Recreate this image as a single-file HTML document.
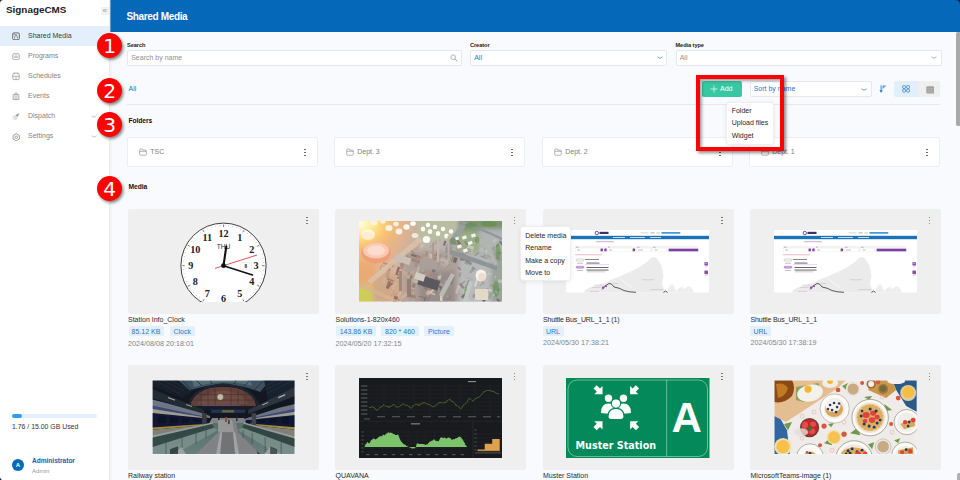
<!DOCTYPE html>
<html><head><meta charset="utf-8"><title>Shared Media</title>
<style>
*{box-sizing:border-box;margin:0;padding:0}
html,body{width:960px;height:480px;overflow:hidden;background:#f9fafd;font-family:"Liberation Sans",sans-serif;font-size:7px;color:#333}
.abs{position:absolute}
#side{position:absolute;left:0;top:0;width:110px;height:480px;background:#fff;border-right:1px solid #e9ebef;box-shadow:1px 0 2px rgba(0,0,0,.05)}
#brand{position:absolute;left:6px;top:4.3px;font-size:9.9px;font-weight:bold;color:#222}
.mi{position:absolute;left:0;width:109px;height:20px;line-height:20.8px;padding-left:28px;color:#838383;font-size:7px;overflow:hidden}
.mi.act{background:#e3f0fc;color:#3c3c3c}
.mi svg{position:absolute;left:12px;top:6px}
#hdr{position:absolute;left:110px;top:0;width:850px;height:32px;background:#0568b8}
#hdr span{position:absolute;left:16.4px;top:11.1px;color:#fff;font-size:10px;font-weight:bold;letter-spacing:-.34px}
.lbl{position:absolute;margin-top:1px;font-size:5.6px;letter-spacing:-.05px;font-weight:bold;color:#222;white-space:nowrap}
.inp{position:absolute;height:16px;background:#fff;border:1px solid #e4e7ec;border-radius:2px;line-height:14.5px;padding-left:3.2px;font-size:7px;color:#909090;white-space:nowrap}
.blue{color:#2a78c2}
.sec{position:absolute;font-size:6.7px;letter-spacing:-.08px;font-weight:bold;color:#111}
.fold{position:absolute;top:137px;width:191px;height:30px;background:#fff;border:1px solid #eceef1;border-radius:2px}
.fold span{position:absolute;left:22.2px;top:10.3px;font-size:7px;color:#7e7e7e}
.fold svg{position:absolute;left:11.3px;top:10.2px}
.card{position:absolute;width:191px;height:105px;background:#efefef;border-radius:2px}
.cap{position:absolute;margin-top:.3px;font-size:7px;color:#2a2a2a;white-space:nowrap}
.tag{position:absolute;margin-top:-.4px;height:9.9px;line-height:11.6px;background:#e3f0fc;color:#2a78c2;font-size:7px;border-radius:1.5px;text-align:center;white-space:nowrap}
.date{position:absolute;font-size:7.2px;color:#858585;white-space:nowrap}
.dots{position:absolute;width:1.6px;height:1.6px;border-radius:50%;background:#6a6a6a;box-shadow:0 3px 0 #6a6a6a,0 6px 0 #6a6a6a}
.num{position:absolute;width:25px;height:25px;border-radius:50%;background:#fd0303;color:#fff;font-family:"DejaVu Sans",sans-serif;font-size:20.3px;line-height:26.2px;text-align:center;box-shadow:1.5px 2px 3px rgba(0,0,0,.45)}
.menu{position:absolute;background:#fff;border:1px solid #eceef1;border-radius:2px;box-shadow:0 1px 4px rgba(0,0,0,.08)}
.menu div{position:absolute;left:4px;font-size:7px;color:#262626;white-space:nowrap}
</style></head><body>
<div id="side">
 <div id="brand">SignageCMS</div>
 <div class="abs" style="left:101px;top:6.7px;width:7.5px;height:8px;background:#f2f2f2;color:#9a9a9a;font-size:8px;line-height:7.4px;text-align:center">«</div>
 <div class="mi act" style="top:26px">Shared Media</div>
 <div class="mi" style="top:46px">Programs</div>
 <div class="mi" style="top:66px">Schedules</div>
 <div class="mi" style="top:86px">Events</div>
 <div class="mi" style="top:106px">Dispatch</div>
 <div class="mi" style="top:126px">Settings</div>
 <svg class="abs" style="left:12px;top:31.5px" width="8" height="8.5" viewBox="0 0 8 8.5"><rect x=".7" y=".9" width="6.6" height="6.8" rx="1.1" fill="#eef2f6" stroke="#5a5f66" stroke-width=".9"/><path d="M2.3 6.6 L3.6 2.6 L4.4 2.6 L5.8 6.6 M1.3 2.2 H3" stroke="#5a5f66" stroke-width=".7" fill="none"/></svg>
<svg class="abs" style="left:12px;top:52.5px" width="8" height="7.5" viewBox="0 0 8 7.5"><rect x=".8" y=".8" width="6.4" height="5.9" rx=".9" fill="none" stroke="#a2a2a2" stroke-width=".9"/><path d="M2.7 3 H5.3 V4.5 H2.7Z" fill="none" stroke="#a2a2a2" stroke-width=".7"/></svg>
<svg class="abs" style="left:12px;top:72px" width="8" height="8.5" viewBox="0 0 8 8.5"><rect x=".8" y="1.2" width="6.4" height="6.4" rx="1.3" fill="none" stroke="#a2a2a2" stroke-width=".9"/><path d="M.8 4.2 H7.2 M4 4.2 V7.4 M2.6 .6 V2 M5.4 .6 V2" stroke="#a2a2a2" stroke-width=".8"/></svg>
<svg class="abs" style="left:12px;top:92px" width="8" height="8.5" viewBox="0 0 8 8.5"><path d="M1.2 2.6 H6.8 V7.6 H1.2Z" fill="none" stroke="#a2a2a2" stroke-width=".9"/><path d="M2.6 2.4 Q2.6 .9 4 .9 Q5.4 .9 5.4 2.4 M3.1 3.4 V7.4 M4.9 3.4 V7.4" stroke="#a2a2a2" stroke-width=".8" fill="none"/></svg>
<svg class="abs" style="left:12px;top:112px" width="8.5" height="8.5" viewBox="0 0 8.5 8.5"><path d="M7.6 .9 L5.6 5.2 L4.4 4.1 L3.3 2.9Z" fill="#a2a2a2"/><path d="M4.6 3.9 L1.2 7.4 M2.6 3.6 L.9 5.3 M5 5.9 L3.2 7.6" stroke="#a2a2a2" stroke-width=".8" fill="none"/></svg>
<svg class="abs" style="left:12px;top:132.5px" width="8.5" height="8.5" viewBox="0 0 8.5 8.5"><path d="M4.25 .7 L7.4 2.5 V6 L4.25 7.8 L1.1 6 V2.5Z" fill="none" stroke="#8f8f8f" stroke-width=".85"/><circle cx="4.25" cy="4.25" r="1.25" fill="none" stroke="#8f8f8f" stroke-width=".8"/></svg>
<svg class="abs" style="left:91px;top:114.5px" width="6" height="4" viewBox="0 0 6 4"><path d="M.6 .8 Q3 3.6 5.4 .8" fill="none" stroke="#aaa" stroke-width=".7"/></svg>
<svg class="abs" style="left:91px;top:134.5px" width="6" height="4" viewBox="0 0 6 4"><path d="M.6 .8 Q3 3.6 5.4 .8" fill="none" stroke="#aaa" stroke-width=".7"/></svg>

 <div class="abs" style="left:12px;top:414px;width:85px;height:4px;border-radius:2px;background:#e3f0fd"></div>
 <div class="abs" style="left:12px;top:414px;width:10px;height:4px;border-radius:2px;background:#2d9cf5"></div>
 <div class="abs" style="left:12px;top:422.8px;font-size:6.9px;color:#333">1.76 / 15.00 GB Used</div>
 <div class="abs" style="left:12px;top:459px;width:12px;height:12px;border-radius:50%;background:#0568b8;color:#fff;font-size:6px;font-weight:bold;line-height:12px;text-align:center">A</div>
 <div class="abs" style="left:32px;top:457.2px;font-size:6.55px;font-weight:bold;color:#0d63ad">Administrator</div>
 <div class="abs" style="left:32px;top:466.8px;font-size:6.1px;color:#999">Admin</div>
</div>
<div id="hdr"><span>Shared Media</span></div><div class="abs" style="left:109.6px;top:0;width:1.2px;height:32px;background:rgba(255,255,255,.35)"></div>

<div class="lbl" style="left:127px;top:41px">Search</div>
<div class="inp" style="left:127px;top:50px;width:335px">Search by name</div>
<div class="lbl" style="left:470px;top:41px">Creator</div>
<div class="inp blue" style="left:470px;top:50px;width:197px">All</div>
<div class="lbl" style="left:675.5px;top:41px">Media type</div>
<div class="inp" style="left:675.5px;top:50px;width:266px">All</div>

<div class="abs blue" style="left:128.5px;top:85px;font-size:7px">All</div>
<div class="abs" style="left:127px;top:104px;width:813px;height:1px;background:#e6e8ec"></div>

<div class="abs" style="left:702px;top:81px;width:39.5px;height:16px;background:#36c8a3;border-radius:2px;color:#fff;font-size:7px;line-height:16.6px;padding-left:18px">Add</div>
<div class="inp blue" style="left:749.5px;top:81px;width:122px;height:16px;line-height:14px">Sort by name</div>
<div class="abs" style="left:893.5px;top:81px;width:24.5px;height:16.4px;background:#e1effb;border-radius:2px 0 0 2px"></div>
<div class="abs" style="left:918px;top:81px;width:22px;height:16.4px;background:#efefef;border-radius:0 2px 2px 0"></div>
<svg class="abs" style="left:449.5px;top:54px" width="8" height="8" viewBox="0 0 8 8"><circle cx="3.2" cy="3.2" r="2.3" fill="none" stroke="#9a9a9a" stroke-width=".75"/><path d="M4.9 4.9 L7.3 7.3" stroke="#9a9a9a" stroke-width=".85"/></svg>
<svg class="abs" style="left:656.5px;top:56.3px" width="6" height="4" viewBox="0 0 6 4"><path d="M.5 .9 Q3 3.6 5.5 .9" fill="none" stroke="#3a85cc" stroke-width=".75"/></svg>
<svg class="abs" style="left:930.5px;top:56.3px" width="6" height="4" viewBox="0 0 6 4"><path d="M.5 .9 Q3 3.6 5.5 .9" fill="none" stroke="#9a9a9a" stroke-width=".75"/></svg>
<svg class="abs" style="left:861px;top:87.5px" width="6" height="4" viewBox="0 0 6 4"><path d="M.5 .9 Q3 3.6 5.5 .9" fill="none" stroke="#3a85cc" stroke-width=".75"/></svg>
<svg class="abs" style="left:878.5px;top:84.8px" width="8" height="8" viewBox="0 0 8 8"><path d="M2.1 .4 V6.4" stroke="#2a78c2" stroke-width=".9"/><path d="M.8 5.5 L2.1 7.4 L3.4 5.5Z" fill="#2a78c2" stroke="#2a78c2" stroke-width=".5"/><path d="M3.5 .4 H7.5 L3.5 4.3Z" fill="#4a90d4" opacity=".85"/></svg>
<svg class="abs" style="left:901.6px;top:85.3px" width="8.4" height="7.9" viewBox="0 0 9 8.5"><g fill="none" stroke="#2a78c2" stroke-width=".8"><rect x=".7" y=".7" width="3.1" height="3" rx=".9"/><rect x="5" y=".7" width="3.1" height="3" rx=".9"/><rect x=".7" y="4.6" width="3.1" height="3" rx=".9"/><rect x="5" y="4.6" width="3.1" height="3" rx=".9"/></g></svg>
<svg class="abs" style="left:925.8px;top:85.6px" width="8.5" height="8" viewBox="0 0 8.5 8"><rect x=".3" y=".3" width="7.8" height="7.2" rx="1.2" fill="#a0a0a0"/><path d="M.3 2.7 H8.1 M.3 5.1 H8.1 M3 2.7 V7.5 M5.6 2.7 V7.5" stroke="#c4c4c4" stroke-width=".45"/></svg>
<svg class="abs" style="left:710.2px;top:85.4px" width="8" height="8" viewBox="0 0 8 8"><path d="M4 .5 V7.5 M.5 4 H7.5" stroke="#fff" stroke-width=".65"/></svg>


<div class="sec" style="left:128.5px;top:116.5px">Folders</div>
<div class="fold" style="left:127px"><svg width="8" height="8" viewBox="0 0 8 8"><path d="M.7 2 Q.7 1 1.5 1 H3.2 L3.9 2.1 H6.5 Q7.3 2.1 7.3 2.9 V6.4 Q7.3 7.2 6.5 7.2 H1.5 Q.7 7.2 .7 6.4Z M.7 3.3 H7.3" fill="none" stroke="#8f8f8f" stroke-width=".65"/></svg>
<span>TSC</span><i class="dots" style="left:176.4px;top:10.6px;background:#555;box-shadow:0 3px 0 #555,0 6px 0 #555"></i></div>
<div class="fold" style="left:334px"><svg width="8" height="8" viewBox="0 0 8 8"><path d="M.7 2 Q.7 1 1.5 1 H3.2 L3.9 2.1 H6.5 Q7.3 2.1 7.3 2.9 V6.4 Q7.3 7.2 6.5 7.2 H1.5 Q.7 7.2 .7 6.4Z M.7 3.3 H7.3" fill="none" stroke="#8f8f8f" stroke-width=".65"/></svg>
<span>Dept. 3</span><i class="dots" style="left:176.4px;top:10.6px;background:#555;box-shadow:0 3px 0 #555,0 6px 0 #555"></i></div>
<div class="fold" style="left:542px"><svg width="8" height="8" viewBox="0 0 8 8"><path d="M.7 2 Q.7 1 1.5 1 H3.2 L3.9 2.1 H6.5 Q7.3 2.1 7.3 2.9 V6.4 Q7.3 7.2 6.5 7.2 H1.5 Q.7 7.2 .7 6.4Z M.7 3.3 H7.3" fill="none" stroke="#8f8f8f" stroke-width=".65"/></svg>
<span>Dept. 2</span><i class="dots" style="left:176.4px;top:10.6px;background:#555;box-shadow:0 3px 0 #555,0 6px 0 #555"></i></div>
<div class="fold" style="left:749px"><svg width="8" height="8" viewBox="0 0 8 8"><path d="M.7 2 Q.7 1 1.5 1 H3.2 L3.9 2.1 H6.5 Q7.3 2.1 7.3 2.9 V6.4 Q7.3 7.2 6.5 7.2 H1.5 Q.7 7.2 .7 6.4Z M.7 3.3 H7.3" fill="none" stroke="#8f8f8f" stroke-width=".65"/></svg>
<span>Dept. 1</span><i class="dots" style="left:176.4px;top:10.6px;background:#555;box-shadow:0 3px 0 #555,0 6px 0 #555"></i></div>

<div class="sec" style="left:128.5px;top:183px">Media</div>

<div class="card" style="left:127.5px;top:209px"><i class="dots" style="left:178.6px;top:7.6px"></i></div>
<div class="card" style="left:335px;top:209px"><i class="dots" style="left:178.6px;top:7.6px"></i></div>
<div class="card" style="left:542.5px;top:209px"><i class="dots" style="left:178.6px;top:7.6px"></i></div>
<div class="card" style="left:750px;top:209px"><i class="dots" style="left:178.6px;top:7.6px"></i></div>
<div class="card" style="left:127.5px;top:365px"><i class="dots" style="left:178.6px;top:7.6px"></i></div>
<div class="card" style="left:335px;top:365px"><i class="dots" style="left:178.6px;top:7.6px"></i></div>
<div class="card" style="left:542.5px;top:365px"><i class="dots" style="left:178.6px;top:7.6px"></i></div>
<div class="card" style="left:750px;top:365px"><i class="dots" style="left:178.6px;top:7.6px"></i></div>
<svg class="abs" style="left:151.8px;top:222px" width="143" height="80" viewBox="0 0 143 80">
<circle cx="71.5" cy="43.7" r="42.6" fill="#fff" stroke="#2a2a2a" stroke-width=".9"/>
<circle cx="71.5" cy="43.7" r="40.2" fill="none" stroke="#777" stroke-width=".9" stroke-dasharray=".5 3.71"/>
<path d="M71.5 5.1L71.5 2.4M90.8 10.3L92.1 7.9M104.9 24.4L107.3 23.1M110.1 43.7L112.8 43.7M104.9 63.0L107.3 64.3M90.8 77.1L92.1 79.5M71.5 82.3L71.5 85.0M52.2 77.1L50.8 79.5M38.1 63.0L35.7 64.4M32.9 43.7L30.2 43.7M38.1 24.4L35.7 23.1M52.2 10.3L50.8 7.9" stroke="#444" stroke-width=".6"/>
<g font-family="Liberation Serif,serif" font-weight="bold" font-size="10.2" fill="#1c1c1c" text-anchor="middle"><text x="87.8" y="18.8">1</text><text x="99.7" y="30.8">2</text><text x="104.1" y="47.1">3</text><text x="99.7" y="63.4">4</text><text x="87.8" y="75.3">5</text><text x="71.5" y="79.7">6</text><text x="55.2" y="75.3">7</text><text x="43.3" y="63.4">8</text><text x="38.9" y="47.1">9</text><text x="43.3" y="30.8">10</text><text x="55.2" y="18.8">11</text><text x="71.5" y="14.5">12</text></g>
<text x="71.5" y="27" font-family="Liberation Sans,sans-serif" font-size="6.6" fill="#2a2a2a" text-anchor="middle">THU</text>
<rect x="88.2" y="40.6" width="11.4" height="6.6" rx=".5" fill="#fff" stroke="#d0d0d0" stroke-width=".4"/>
<text x="93.9" y="45.8" font-family="Liberation Serif,serif" font-weight="bold" font-size="5.2" fill="#222" text-anchor="middle">8</text>
<line x1="63" y1="46.4" x2="105" y2="33" stroke="#d8262a" stroke-width=".8"/>
<line x1="71.5" y1="43.7" x2="74.3" y2="24.5" stroke="#111" stroke-width="2.1" stroke-linecap="round"/>
<line x1="71.5" y1="43.7" x2="100.5" y2="53" stroke="#111" stroke-width="1.5" stroke-linecap="round"/>
<circle cx="71.5" cy="43.7" r="2.4" fill="#111"/>
</svg><svg class="abs" style="left:359px;top:221.2px" width="143" height="80.5" viewBox="0 0 143 80.5" preserveAspectRatio="none">
<defs>
<filter id="b2" x="-20%" y="-20%" width="140%" height="140%"><feGaussianBlur stdDeviation="2.2"/></filter>
<filter id="b1" x="-20%" y="-20%" width="140%" height="140%"><feGaussianBlur stdDeviation=".55"/></filter>
<linearGradient id="sbase" x1="0" y1="0" x2="1" y2="0"><stop offset="0" stop-color="#ecb884"/><stop offset=".25" stop-color="#d6b49c"/><stop offset=".45" stop-color="#bcb3ab"/><stop offset="1" stop-color="#b2b7b8"/></linearGradient>
<radialGradient id="sun" cx="0" cy="0" r="1" gradientUnits="userSpaceOnUse" gradientTransform="translate(0 2) scale(62 50)">
<stop offset="0" stop-color="#fffde4"/><stop offset=".14" stop-color="#fff3b4"/><stop offset=".3" stop-color="#ffdf80"/><stop offset=".5" stop-color="#fcc06e" stop-opacity=".8"/><stop offset="1" stop-color="#f0a878" stop-opacity="0"/></radialGradient>
<clipPath id="cs"><rect width="143" height="80.5"/></clipPath>
</defs>
<g clip-path="url(#cs)">
<rect width="143" height="80.5" fill="url(#sbase)"/>
<g filter="url(#b2)">
<rect x="58" y="-4" width="40" height="24" fill="#b9bea0"/>
<rect x="100" y="-5" width="50" height="16" fill="#7f9470"/>
<rect x="96" y="10" width="26" height="22" fill="#9aad86"/>
<rect x="120" y="8" width="28" height="30" fill="#b0b4b2"/>
<rect x="132" y="30" width="16" height="55" fill="#9aa498"/>
<rect x="44" y="30" width="56" height="55" fill="#aba099"/>
<rect x="60" y="50" width="36" height="34" fill="#968d8a"/>
<rect x="100" y="40" width="32" height="44" fill="#b8baba"/>
<rect x="-4" y="66" width="20" height="18" fill="#cfcd58"/>
<rect x="14" y="52" width="30" height="30" fill="#cfa98c"/>
<rect x="-4" y="40" width="20" height="24" fill="#e9ab74"/>
</g>
<rect width="143" height="80.5" fill="url(#sun)"/>
<g filter="url(#b1)">
<rect x="50.1" y="51.7" width="4.6" height="2.8" fill="rgb(204, 170, 148)" opacity="0.46" transform="rotate(-40 50.1 51.7)"/><rect x="52.6" y="32.5" width="9.0" height="2.4" fill="rgb(109, 91, 88)" opacity="0.74" transform="rotate(18 52.6 32.5)"/><rect x="49.4" y="27.4" width="2.2" height="8.5" fill="rgb(173, 140, 121)" opacity="0.79" transform="rotate(-40 49.4 27.4)"/><rect x="27.0" y="66.4" width="7.8" height="1.8" fill="rgb(121, 95, 88)" opacity="0.80" transform="rotate(-40 27.0 66.4)"/><rect x="68.6" y="67.7" width="5.1" height="3.8" fill="rgb(184, 159, 144)" opacity="0.51" transform="rotate(18 68.6 67.7)"/><rect x="52.4" y="59.7" width="7.5" height="3.6" fill="rgb(151, 131, 125)" opacity="0.61" transform="rotate(-40 52.4 59.7)"/><rect x="70.1" y="32.4" width="3.7" height="4.4" fill="rgb(219, 200, 183)" opacity="0.75" transform="rotate(18 70.1 32.4)"/><rect x="104.4" y="38.2" width="2.7" height="5.8" fill="rgb(124, 119, 120)" opacity="0.73" transform="rotate(-40 104.4 38.2)"/><rect x="53.5" y="25.7" width="5.4" height="2.9" fill="rgb(194, 167, 144)" opacity="0.48" transform="rotate(18 53.5 25.7)"/><rect x="24.4" y="44.5" width="4.9" height="1.4" fill="rgb(191, 147, 119)" opacity="0.77" transform="rotate(18 24.4 44.5)"/><rect x="87.0" y="75.2" width="1.7" height="4.0" fill="rgb(180, 163, 154)" opacity="0.50" transform="rotate(-40 87.0 75.2)"/><rect x="70.1" y="55.8" width="3.1" height="1.1" fill="rgb(207, 190, 174)" opacity="0.88" transform="rotate(-40 70.1 55.8)"/><rect x="66.5" y="71.9" width="4.7" height="3.6" fill="rgb(208, 182, 163)" opacity="0.89" transform="rotate(-40 66.5 71.9)"/><rect x="54.0" y="57.3" width="7.0" height="3.8" fill="rgb(217, 194, 172)" opacity="0.59" transform="rotate(18 54.0 57.3)"/><rect x="23.4" y="43.7" width="6.1" height="1.1" fill="rgb(170, 129, 108)" opacity="0.48" transform="rotate(108 23.4 43.7)"/><rect x="61.2" y="39.9" width="2.8" height="8.4" fill="rgb(138, 121, 118)" opacity="0.72" transform="rotate(108 61.2 39.9)"/><rect x="24.5" y="40.9" width="6.4" height="1.9" fill="rgb(152, 113, 100)" opacity="0.53" transform="rotate(18 24.5 40.9)"/><rect x="121.6" y="34.4" width="7.5" height="1.3" fill="rgb(146, 150, 151)" opacity="0.78" transform="rotate(18 121.6 34.4)"/><rect x="81.0" y="58.5" width="3.9" height="2.0" fill="rgb(154, 138, 131)" opacity="0.49" transform="rotate(-40 81.0 58.5)"/><rect x="60.0" y="38.7" width="7.8" height="2.3" fill="rgb(157, 132, 125)" opacity="0.60" transform="rotate(108 60.0 38.7)"/><rect x="47.7" y="53.2" width="3.4" height="3.9" fill="rgb(162, 133, 123)" opacity="0.81" transform="rotate(-40 47.7 53.2)"/><rect x="117.3" y="57.8" width="2.0" height="7.6" fill="rgb(224, 220, 215)" opacity="0.81" transform="rotate(18 117.3 57.8)"/><rect x="76.8" y="57.3" width="2.7" height="4.0" fill="rgb(114, 104, 104)" opacity="0.54" transform="rotate(-40 76.8 57.3)"/><rect x="133.3" y="72.6" width="8.9" height="2.3" fill="rgb(110, 116, 124)" opacity="0.46" transform="rotate(-40 133.3 72.6)"/><rect x="120.7" y="59.1" width="1.9" height="5.6" fill="rgb(150, 137, 128)" opacity="0.48" transform="rotate(-40 120.7 59.1)"/><rect x="136.6" y="25.4" width="3.7" height="1.1" fill="rgb(110, 116, 124)" opacity="0.85" transform="rotate(-40 136.6 25.4)"/><rect x="90.1" y="18.8" width="1.5" height="7.2" fill="rgb(170, 156, 151)" opacity="0.69" transform="rotate(-40 90.1 18.8)"/><rect x="28.3" y="74.6" width="2.8" height="1.4" fill="rgb(219, 191, 164)" opacity="0.82" transform="rotate(18 28.3 74.6)"/><rect x="63.5" y="30.2" width="3.5" height="5.7" fill="rgb(188, 164, 142)" opacity="0.51" transform="rotate(18 63.5 30.2)"/><rect x="79.5" y="53.4" width="3.3" height="4.8" fill="rgb(227, 214, 199)" opacity="0.68" transform="rotate(18 79.5 53.4)"/><rect x="77.8" y="66.1" width="1.2" height="2.0" fill="rgb(182, 161, 149)" opacity="0.48" transform="rotate(18 77.8 66.1)"/><rect x="122.8" y="23.3" width="1.9" height="5.5" fill="rgb(92, 95, 101)" opacity="0.74" transform="rotate(-40 122.8 23.3)"/><rect x="57.9" y="34.4" width="2.3" height="8.9" fill="rgb(176, 148, 130)" opacity="0.78" transform="rotate(18 57.9 34.4)"/><rect x="88.9" y="20.7" width="5.2" height="3.0" fill="rgb(158, 136, 123)" opacity="0.47" transform="rotate(-40 88.9 20.7)"/><rect x="28.3" y="56.9" width="7.3" height="1.9" fill="rgb(117, 91, 85)" opacity="0.46" transform="rotate(18 28.3 56.9)"/><rect x="85.2" y="61.1" width="2.5" height="2.3" fill="rgb(198, 180, 169)" opacity="0.62" transform="rotate(-40 85.2 61.1)"/><rect x="115.3" y="34.3" width="5.2" height="1.4" fill="rgb(152, 138, 128)" opacity="0.85" transform="rotate(-40 115.3 34.3)"/><rect x="100.8" y="63.5" width="5.9" height="1.3" fill="rgb(113, 105, 103)" opacity="0.51" transform="rotate(-40 100.8 63.5)"/><rect x="33.7" y="72.6" width="3.3" height="1.1" fill="rgb(192, 152, 126)" opacity="0.83" transform="rotate(108 33.7 72.6)"/><rect x="78.9" y="61.2" width="1.9" height="4.0" fill="rgb(227, 213, 198)" opacity="0.69" transform="rotate(18 78.9 61.2)"/><rect x="34.6" y="64.4" width="1.2" height="8.5" fill="rgb(214, 188, 163)" opacity="0.82" transform="rotate(18 34.6 64.4)"/><rect x="139.8" y="58.1" width="5.2" height="3.1" fill="rgb(200, 202, 204)" opacity="0.72" transform="rotate(18 139.8 58.1)"/><rect x="87.7" y="77.9" width="4.6" height="1.7" fill="rgb(133, 121, 117)" opacity="0.64" transform="rotate(-40 87.7 77.9)"/><rect x="111.2" y="59.8" width="5.6" height="2.5" fill="rgb(116, 114, 119)" opacity="0.49" transform="rotate(108 111.2 59.8)"/><rect x="79.1" y="61.3" width="8.7" height="2.8" fill="rgb(176, 159, 153)" opacity="0.79" transform="rotate(18 79.1 61.3)"/><rect x="91.1" y="37.5" width="3.6" height="3.1" fill="rgb(166, 158, 150)" opacity="0.77" transform="rotate(-40 91.1 37.5)"/><rect x="92.2" y="54.2" width="3.7" height="8.9" fill="rgb(128, 120, 115)" opacity="0.81" transform="rotate(18 92.2 54.2)"/><rect x="42.3" y="40.3" width="3.3" height="4.3" fill="rgb(154, 121, 105)" opacity="0.77" transform="rotate(18 42.3 40.3)"/><rect x="77.2" y="69.7" width="7.8" height="2.7" fill="rgb(170, 151, 143)" opacity="0.84" transform="rotate(-40 77.2 69.7)"/><rect x="114.4" y="72.7" width="2.3" height="3.7" fill="rgb(144, 143, 144)" opacity="0.80" transform="rotate(18 114.4 72.7)"/><rect x="135.1" y="70.9" width="1.6" height="3.7" fill="rgb(226, 226, 224)" opacity="0.77" transform="rotate(18 135.1 70.9)"/><rect x="128.2" y="33.8" width="8.1" height="1.9" fill="rgb(150, 139, 131)" opacity="0.49" transform="rotate(18 128.2 33.8)"/><rect x="53.2" y="74.7" width="2.3" height="2.4" fill="rgb(200, 177, 157)" opacity="0.46" transform="rotate(18 53.2 74.7)"/><rect x="73.5" y="48.1" width="3.5" height="2.8" fill="rgb(115, 103, 103)" opacity="0.69" transform="rotate(18 73.5 48.1)"/><rect x="126.2" y="22.7" width="5.0" height="2.3" fill="rgb(171, 172, 175)" opacity="0.69" transform="rotate(108 126.2 22.7)"/><rect x="66.2" y="65.9" width="7.3" height="1.9" fill="rgb(162, 134, 118)" opacity="0.82" transform="rotate(18 66.2 65.9)"/><rect x="111.0" y="77.6" width="2.6" height="6.7" fill="rgb(207, 202, 199)" opacity="0.61" transform="rotate(108 111.0 77.6)"/><rect x="56.7" y="63.1" width="7.2" height="2.9" fill="rgb(136, 112, 105)" opacity="0.62" transform="rotate(108 56.7 63.1)"/><rect x="75.6" y="24.7" width="5.9" height="3.8" fill="rgb(199, 178, 166)" opacity="0.64" transform="rotate(18 75.6 24.7)"/><rect x="98.4" y="46.4" width="1.5" height="4.2" fill="rgb(127, 120, 119)" opacity="0.79" transform="rotate(-40 98.4 46.4)"/><rect x="90.0" y="42.3" width="1.8" height="2.7" fill="rgb(162, 149, 146)" opacity="0.67" transform="rotate(18 90.0 42.3)"/><rect x="51.2" y="65.7" width="4.5" height="2.0" fill="rgb(207, 182, 159)" opacity="0.80" transform="rotate(18 51.2 65.7)"/><rect x="80.8" y="79.7" width="3.1" height="2.8" fill="rgb(185, 166, 149)" opacity="0.86" transform="rotate(18 80.8 79.7)"/><rect x="71.2" y="64.1" width="7.7" height="3.2" fill="rgb(150, 123, 112)" opacity="0.63" transform="rotate(18 71.2 64.1)"/><rect x="86.3" y="28.6" width="3.3" height="3.6" fill="rgb(187, 175, 165)" opacity="0.83" transform="rotate(-40 86.3 28.6)"/><rect x="127.2" y="76.9" width="4.7" height="2.7" fill="rgb(86, 91, 98)" opacity="0.89" transform="rotate(108 127.2 76.9)"/><rect x="105.4" y="73.5" width="1.1" height="6.7" fill="rgb(170, 162, 160)" opacity="0.50" transform="rotate(108 105.4 73.5)"/><rect x="49.6" y="28.7" width="6.4" height="1.6" fill="rgb(155, 126, 117)" opacity="0.82" transform="rotate(108 49.6 28.7)"/><rect x="133.7" y="24.9" width="3.0" height="4.0" fill="rgb(150, 140, 132)" opacity="0.49" transform="rotate(18 133.7 24.9)"/><rect x="25.0" y="56.3" width="2.5" height="5.5" fill="rgb(213, 181, 152)" opacity="0.60" transform="rotate(18 25.0 56.3)"/><rect x="104.0" y="26.3" width="8.0" height="2.8" fill="rgb(170, 162, 159)" opacity="0.78" transform="rotate(18 104.0 26.3)"/><rect x="139.7" y="30.7" width="2.4" height="1.6" fill="rgb(84, 90, 98)" opacity="0.59" transform="rotate(18 139.7 30.7)"/><rect x="70.2" y="70.4" width="6.9" height="2.2" fill="rgb(209, 184, 167)" opacity="0.83" transform="rotate(18 70.2 70.4)"/><rect x="98.6" y="36.9" width="5.3" height="3.3" fill="rgb(102, 95, 97)" opacity="0.85" transform="rotate(108 98.6 36.9)"/><rect x="52.3" y="70.6" width="5.1" height="2.1" fill="rgb(182, 147, 123)" opacity="0.54" transform="rotate(18 52.3 70.6)"/><rect x="38.9" y="46.5" width="1.6" height="3.4" fill="rgb(138, 115, 108)" opacity="0.53" transform="rotate(18 38.9 46.5)"/><rect x="38.4" y="55.7" width="5.1" height="1.6" fill="rgb(113, 91, 86)" opacity="0.59" transform="rotate(18 38.4 55.7)"/><rect x="105.0" y="21.2" width="2.2" height="4.8" fill="rgb(119, 114, 117)" opacity="0.49" transform="rotate(-40 105.0 21.2)"/><rect x="35.7" y="74.6" width="3.4" height="6.2" fill="rgb(124, 98, 90)" opacity="0.87" transform="rotate(18 35.7 74.6)"/><rect x="79.7" y="52.8" width="2.2" height="2.0" fill="rgb(190, 175, 164)" opacity="0.48" transform="rotate(-40 79.7 52.8)"/><rect x="136.4" y="54.7" width="1.1" height="2.0" fill="rgb(226, 226, 224)" opacity="0.47" transform="rotate(18 136.4 54.7)"/><rect x="44.3" y="49.6" width="4.3" height="3.7" fill="rgb(199, 171, 146)" opacity="0.67" transform="rotate(18 44.3 49.6)"/><rect x="132.9" y="20.1" width="4.1" height="2.8" fill="rgb(200, 202, 204)" opacity="0.53" transform="rotate(-40 132.9 20.1)"/><rect x="35.5" y="42.2" width="4.3" height="3.0" fill="rgb(150, 114, 101)" opacity="0.78" transform="rotate(108 35.5 42.2)"/><rect x="67.5" y="76.1" width="4.5" height="1.6" fill="rgb(115, 102, 101)" opacity="0.65" transform="rotate(108 67.5 76.1)"/><rect x="78.7" y="34.7" width="3.2" height="3.2" fill="rgb(154, 138, 130)" opacity="0.62" transform="rotate(-40 78.7 34.7)"/><rect x="110.7" y="69.0" width="2.6" height="3.1" fill="rgb(128, 127, 128)" opacity="0.72" transform="rotate(108 110.7 69.0)"/><rect x="28.7" y="56.0" width="2.3" height="2.4" fill="rgb(174, 135, 115)" opacity="0.90" transform="rotate(18 28.7 56.0)"/><rect x="30.5" y="42.8" width="8.7" height="1.3" fill="rgb(185, 144, 117)" opacity="0.49" transform="rotate(108 30.5 42.8)"/><rect x="46.8" y="60.7" width="3.8" height="8.8" fill="rgb(189, 155, 133)" opacity="0.55" transform="rotate(18 46.8 60.7)"/><rect x="48.0" y="52.9" width="4.9" height="3.3" fill="rgb(209, 184, 160)" opacity="0.53" transform="rotate(18 48.0 52.9)"/><rect x="95.4" y="20.6" width="7.6" height="2.8" fill="rgb(137, 126, 122)" opacity="0.87" transform="rotate(18 95.4 20.6)"/><rect x="32.1" y="46.8" width="3.6" height="3.5" fill="rgb(162, 125, 106)" opacity="0.79" transform="rotate(108 32.1 46.8)"/><rect x="62.8" y="55.4" width="5.1" height="1.3" fill="rgb(173, 157, 141)" opacity="0.82" transform="rotate(18 62.8 55.4)"/><rect x="57.3" y="57.8" width="4.4" height="1.6" fill="rgb(199, 181, 163)" opacity="0.78" transform="rotate(-40 57.3 57.8)"/><rect x="114.5" y="22.2" width="5.6" height="1.7" fill="rgb(199, 194, 192)" opacity="0.56" transform="rotate(-40 114.5 22.2)"/><rect x="41.5" y="75.7" width="7.1" height="3.6" fill="rgb(201, 178, 155)" opacity="0.87" transform="rotate(-40 41.5 75.7)"/><rect x="122.6" y="40.8" width="3.3" height="2.9" fill="rgb(86, 90, 97)" opacity="0.90" transform="rotate(18 122.6 40.8)"/><rect x="56.5" y="75.9" width="3.3" height="1.3" fill="rgb(217, 195, 174)" opacity="0.68" transform="rotate(108 56.5 75.9)"/><rect x="77.7" y="30.1" width="2.5" height="3.5" fill="rgb(130, 120, 118)" opacity="0.54" transform="rotate(18 77.7 30.1)"/><rect x="38.9" y="45.5" width="2.3" height="8.4" fill="rgb(125, 100, 92)" opacity="0.81" transform="rotate(18 38.9 45.5)"/><rect x="137.2" y="78.7" width="2.1" height="8.1" fill="rgb(84, 90, 98)" opacity="0.66" transform="rotate(-40 137.2 78.7)"/><rect x="48.3" y="77.3" width="4.0" height="1.1" fill="rgb(197, 169, 145)" opacity="0.82" transform="rotate(108 48.3 77.3)"/><rect x="50.6" y="68.0" width="2.1" height="1.4" fill="rgb(213, 192, 171)" opacity="0.52" transform="rotate(18 50.6 68.0)"/><rect x="22.2" y="79.0" width="7.6" height="2.1" fill="rgb(214, 180, 151)" opacity="0.47" transform="rotate(18 22.2 79.0)"/><rect x="50.2" y="35.2" width="8.3" height="3.5" fill="rgb(165, 133, 113)" opacity="0.59" transform="rotate(18 50.2 35.2)"/><rect x="101.3" y="48.9" width="2.0" height="7.1" fill="rgb(154, 147, 142)" opacity="0.90" transform="rotate(18 101.3 48.9)"/><rect x="129.7" y="68.1" width="3.7" height="1.4" fill="rgb(225, 225, 223)" opacity="0.79" transform="rotate(18 129.7 68.1)"/><rect x="87.1" y="35.3" width="3.2" height="1.1" fill="rgb(98, 90, 92)" opacity="0.68" transform="rotate(-40 87.1 35.3)"/><rect x="82.8" y="41.0" width="1.9" height="6.4" fill="rgb(150, 127, 116)" opacity="0.70" transform="rotate(-40 82.8 41.0)"/><rect x="113.4" y="45.5" width="1.8" height="3.9" fill="rgb(128, 128, 130)" opacity="0.71" transform="rotate(18 113.4 45.5)"/><rect x="83.6" y="43.5" width="8.0" height="3.5" fill="rgb(212, 201, 189)" opacity="0.46" transform="rotate(-40 83.6 43.5)"/><rect x="92.5" y="25.2" width="2.9" height="3.4" fill="rgb(184, 174, 167)" opacity="0.65" transform="rotate(18 92.5 25.2)"/><rect x="65.8" y="49.9" width="8.3" height="3.9" fill="rgb(170, 148, 140)" opacity="0.86" transform="rotate(18 65.8 49.9)"/><rect x="99.2" y="76.4" width="1.1" height="4.8" fill="rgb(198, 187, 180)" opacity="0.59" transform="rotate(-40 99.2 76.4)"/><rect x="87.5" y="20.2" width="4.9" height="2.2" fill="rgb(113, 106, 108)" opacity="0.88" transform="rotate(108 87.5 20.2)"/><rect x="31.4" y="50.6" width="7.2" height="3.5" fill="rgb(196, 155, 128)" opacity="0.89" transform="rotate(108 31.4 50.6)"/><rect x="79.0" y="34.6" width="1.1" height="5.8" fill="rgb(128, 113, 111)" opacity="0.52" transform="rotate(108 79.0 34.6)"/><rect x="43.0" y="79.6" width="2.9" height="6.7" fill="rgb(178, 142, 120)" opacity="0.79" transform="rotate(18 43.0 79.6)"/><rect x="58.7" y="58.2" width="2.9" height="1.4" fill="rgb(176, 150, 141)" opacity="0.55" transform="rotate(18 58.7 58.2)"/><rect x="73.1" y="29.3" width="1.3" height="2.2" fill="rgb(163, 149, 137)" opacity="0.62" transform="rotate(-40 73.1 29.3)"/><rect x="132.8" y="79.8" width="8.9" height="1.7" fill="rgb(170, 172, 176)" opacity="0.77" transform="rotate(18 132.8 79.8)"/><rect x="77.8" y="63.8" width="5.7" height="3.6" fill="rgb(101, 90, 91)" opacity="0.69" transform="rotate(18 77.8 63.8)"/><rect x="74.2" y="51.1" width="7.8" height="1.6" fill="rgb(161, 134, 119)" opacity="0.79" transform="rotate(18 74.2 51.1)"/><rect x="135.7" y="70.1" width="1.8" height="3.2" fill="rgb(226, 226, 224)" opacity="0.89" transform="rotate(-40 135.7 70.1)"/><rect x="94.5" y="29.0" width="1.5" height="6.0" fill="rgb(191, 182, 178)" opacity="0.76" transform="rotate(-40 94.5 29.0)"/><rect x="104.2" y="35.1" width="2.7" height="5.2" fill="rgb(226, 219, 211)" opacity="0.55" transform="rotate(-40 104.2 35.1)"/><rect x="81.8" y="41.2" width="4.2" height="2.1" fill="rgb(187, 170, 161)" opacity="0.84" transform="rotate(18 81.8 41.2)"/><rect x="55.8" y="78.6" width="3.9" height="1.4" fill="rgb(181, 153, 139)" opacity="0.78" transform="rotate(18 55.8 78.6)"/><rect x="55.3" y="77.9" width="5.2" height="2.4" fill="rgb(174, 147, 137)" opacity="0.69" transform="rotate(-40 55.3 77.9)"/><rect x="139.4" y="21.2" width="4.9" height="2.6" fill="rgb(170, 172, 176)" opacity="0.56" transform="rotate(-40 139.4 21.2)"/><rect x="67.3" y="78.8" width="4.6" height="1.6" fill="rgb(147, 124, 110)" opacity="0.78" transform="rotate(-40 67.3 78.8)"/><rect x="105.9" y="40.4" width="4.1" height="2.5" fill="rgb(156, 153, 150)" opacity="0.76" transform="rotate(18 105.9 40.4)"/><rect x="91.0" y="27.1" width="3.5" height="2.1" fill="rgb(162, 149, 147)" opacity="0.54" transform="rotate(-40 91.0 27.1)"/><rect x="55.4" y="19.8" width="5.8" height="3.8" fill="rgb(181, 153, 138)" opacity="0.82" transform="rotate(18 55.4 19.8)"/><rect x="74.1" y="60.3" width="2.8" height="3.6" fill="rgb(115, 103, 103)" opacity="0.85" transform="rotate(18 74.1 60.3)"/><rect x="87.2" y="25.3" width="3.2" height="3.6" fill="rgb(134, 125, 118)" opacity="0.45" transform="rotate(18 87.2 25.3)"/><rect x="77.8" y="26.7" width="3.4" height="2.9" fill="rgb(186, 167, 158)" opacity="0.65" transform="rotate(18 77.8 26.7)"/><rect x="97.6" y="64.2" width="8.1" height="1.2" fill="rgb(191, 180, 175)" opacity="0.48" transform="rotate(18 97.6 64.2)"/><rect x="60.3" y="74.6" width="6.4" height="1.3" fill="rgb(139, 115, 104)" opacity="0.85" transform="rotate(18 60.3 74.6)"/><rect x="126.3" y="30.5" width="4.7" height="1.3" fill="rgb(224, 223, 220)" opacity="0.69" transform="rotate(-40 126.3 30.5)"/><rect x="119.8" y="29.2" width="7.7" height="3.5" fill="rgb(192, 191, 192)" opacity="0.60" transform="rotate(-40 119.8 29.2)"/><rect x="100.1" y="50.8" width="3.4" height="1.9" fill="rgb(205, 194, 189)" opacity="0.69" transform="rotate(-40 100.1 50.8)"/><rect x="83.1" y="37.5" width="8.0" height="2.8" fill="rgb(161, 151, 143)" opacity="0.65" transform="rotate(108 83.1 37.5)"/><rect x="73.1" y="37.3" width="3.6" height="3.4" fill="rgb(141, 121, 109)" opacity="0.50" transform="rotate(-40 73.1 37.3)"/><rect x="68.9" y="31.1" width="3.3" height="1.1" fill="rgb(133, 113, 105)" opacity="0.76" transform="rotate(108 68.9 31.1)"/><rect x="28.7" y="42.9" width="1.5" height="4.7" fill="rgb(210, 179, 152)" opacity="0.76" transform="rotate(18 28.7 42.9)"/><rect x="108.4" y="30.9" width="1.5" height="4.1" fill="rgb(136, 135, 137)" opacity="0.54" transform="rotate(108 108.4 30.9)"/><rect x="65.0" y="32.4" width="6.8" height="2.6" fill="rgb(163, 146, 141)" opacity="0.53" transform="rotate(18 65.0 32.4)"/><rect x="74.2" y="21.5" width="7.5" height="3.6" fill="rgb(170, 158, 147)" opacity="0.57" transform="rotate(-40 74.2 21.5)"/><rect x="102.9" y="31.8" width="4.0" height="7.7" fill="rgb(119, 117, 115)" opacity="0.79" transform="rotate(18 102.9 31.8)"/><rect x="106.6" y="39.0" width="2.8" height="7.1" fill="rgb(135, 133, 133)" opacity="0.83" transform="rotate(-40 106.6 39.0)"/><rect x="96.3" y="27.4" width="2.1" height="8.5" fill="rgb(169, 152, 137)" opacity="0.74" transform="rotate(-40 96.3 27.4)"/><rect x="33.0" y="65.2" width="5.9" height="1.9" fill="rgb(215, 185, 158)" opacity="0.60" transform="rotate(-40 33.0 65.2)"/><rect x="120.6" y="64.4" width="4.0" height="1.0" fill="rgb(151, 139, 129)" opacity="0.61" transform="rotate(-40 120.6 64.4)"/><rect x="65.7" y="29.3" width="4.1" height="1.6" fill="rgb(171, 147, 136)" opacity="0.60" transform="rotate(18 65.7 29.3)"/><rect x="59.7" y="62.9" width="2.2" height="3.2" fill="rgb(158, 140, 134)" opacity="0.71" transform="rotate(18 59.7 62.9)"/><rect x="107.4" y="55.6" width="6.9" height="1.5" fill="rgb(175, 167, 164)" opacity="0.70" transform="rotate(18 107.4 55.6)"/><rect x="130.9" y="71.8" width="2.2" height="5.6" fill="rgb(140, 146, 150)" opacity="0.59" transform="rotate(18 130.9 71.8)"/><rect x="35.8" y="76.8" width="2.3" height="5.3" fill="rgb(163, 127, 110)" opacity="0.57" transform="rotate(-40 35.8 76.8)"/><rect x="133.8" y="59.4" width="1.8" height="3.7" fill="rgb(170, 172, 176)" opacity="0.49" transform="rotate(108 133.8 59.4)"/><rect x="138.2" y="38.7" width="3.5" height="2.8" fill="rgb(140, 146, 150)" opacity="0.67" transform="rotate(-40 138.2 38.7)"/><rect x="37.7" y="73.8" width="5.1" height="2.3" fill="rgb(206, 182, 158)" opacity="0.89" transform="rotate(-40 37.7 73.8)"/><rect x="52.4" y="51.7" width="2.2" height="6.1" fill="rgb(130, 104, 96)" opacity="0.74" transform="rotate(18 52.4 51.7)"/><rect x="115.3" y="26.1" width="7.1" height="1.6" fill="rgb(196, 192, 191)" opacity="0.57" transform="rotate(108 115.3 26.1)"/><rect x="87.7" y="64.2" width="1.6" height="8.4" fill="rgb(170, 155, 149)" opacity="0.67" transform="rotate(108 87.7 64.2)"/><rect x="56.1" y="25.2" width="4.4" height="3.4" fill="rgb(179, 159, 141)" opacity="0.49" transform="rotate(18 56.1 25.2)"/><rect x="126.4" y="26.6" width="2.0" height="1.2" fill="rgb(139, 144, 147)" opacity="0.66" transform="rotate(108 126.4 26.6)"/><rect x="94.1" y="34.3" width="1.0" height="6.9" fill="rgb(112, 103, 101)" opacity="0.53" transform="rotate(18 94.1 34.3)"/><rect x="61.7" y="63.0" width="2.1" height="7.8" fill="rgb(124, 102, 96)" opacity="0.46" transform="rotate(-40 61.7 63.0)"/><rect x="74.5" y="59.4" width="4.3" height="1.7" fill="rgb(197, 175, 161)" opacity="0.55" transform="rotate(18 74.5 59.4)"/><rect x="71.1" y="23.9" width="4.2" height="2.7" fill="rgb(174, 160, 148)" opacity="0.58" transform="rotate(18 71.1 23.9)"/><rect x="69.9" y="54.5" width="3.6" height="2.4" fill="rgb(162, 134, 118)" opacity="0.89" transform="rotate(-40 69.9 54.5)"/><rect x="100.2" y="63.6" width="2.3" height="5.7" fill="rgb(133, 125, 122)" opacity="0.81" transform="rotate(-40 100.2 63.6)"/><rect x="84.6" y="35.6" width="3.8" height="8.6" fill="rgb(159, 150, 142)" opacity="0.59" transform="rotate(-40 84.6 35.6)"/><rect x="41.8" y="40.7" width="9.0" height="1.4" fill="rgb(125, 101, 93)" opacity="0.56" transform="rotate(-40 41.8 40.7)"/><rect x="95.3" y="21.6" width="2.4" height="5.6" fill="rgb(163, 156, 150)" opacity="0.58" transform="rotate(-40 95.3 21.6)"/><rect x="80.0" y="66.3" width="7.6" height="1.9" fill="rgb(130, 121, 119)" opacity="0.47" transform="rotate(108 80.0 66.3)"/><rect x="109.9" y="50.9" width="7.4" height="2.5" fill="rgb(150, 146, 144)" opacity="0.59" transform="rotate(-40 109.9 50.9)"/><rect x="101.8" y="75.4" width="5.0" height="3.1" fill="rgb(93, 90, 94)" opacity="0.66" transform="rotate(-40 101.8 75.4)"/><rect x="132.7" y="38.0" width="5.4" height="2.9" fill="rgb(200, 202, 204)" opacity="0.54" transform="rotate(18 132.7 38.0)"/><rect x="98.8" y="64.1" width="2.4" height="8.7" fill="rgb(222, 212, 202)" opacity="0.48" transform="rotate(18 98.8 64.1)"/><rect x="139.8" y="21.0" width="2.2" height="4.8" fill="rgb(110, 116, 124)" opacity="0.86" transform="rotate(-40 139.8 21.0)"/><rect x="52.1" y="72.8" width="6.0" height="2.0" fill="rgb(197, 165, 144)" opacity="0.78" transform="rotate(-40 52.1 72.8)"/><rect x="64.9" y="63.0" width="1.7" height="3.9" fill="rgb(150, 122, 110)" opacity="0.72" transform="rotate(108 64.9 63.0)"/><rect x="70.8" y="70.4" width="6.2" height="2.2" fill="rgb(228, 212, 194)" opacity="0.70" transform="rotate(-40 70.8 70.4)"/><rect x="45.6" y="42.5" width="6.5" height="3.1" fill="rgb(167, 137, 125)" opacity="0.85" transform="rotate(108 45.6 42.5)"/><rect x="33.5" y="68.6" width="2.5" height="4.8" fill="rgb(199, 159, 132)" opacity="0.55" transform="rotate(18 33.5 68.6)"/><rect x="86.8" y="26.0" width="4.0" height="5.0" fill="rgb(158, 136, 122)" opacity="0.73" transform="rotate(-40 86.8 26.0)"/><rect x="59.2" y="45.5" width="1.8" height="8.5" fill="rgb(209, 187, 169)" opacity="0.70" transform="rotate(18 59.2 45.5)"/><rect x="137.2" y="35.5" width="3.7" height="2.6" fill="rgb(150, 140, 132)" opacity="0.87" transform="rotate(18 137.2 35.5)"/><rect x="109.2" y="23.7" width="5.9" height="3.3" fill="rgb(211, 204, 199)" opacity="0.78" transform="rotate(18 109.2 23.7)"/><rect x="81.9" y="36.5" width="7.9" height="3.8" fill="rgb(196, 184, 173)" opacity="0.81" transform="rotate(18 81.9 36.5)"/><rect x="46.0" y="27.6" width="8.8" height="3.7" fill="rgb(211, 185, 161)" opacity="0.50" transform="rotate(-40 46.0 27.6)"/><rect x="51.6" y="51.1" width="4.8" height="2.7" fill="rgb(195, 175, 156)" opacity="0.65" transform="rotate(18 51.6 51.1)"/><rect x="58.7" y="59.2" width="2.7" height="3.7" fill="rgb(191, 165, 143)" opacity="0.74" transform="rotate(-40 58.7 59.2)"/><rect x="50.1" y="64.3" width="1.4" height="6.3" fill="rgb(210, 186, 164)" opacity="0.72" transform="rotate(18 50.1 64.3)"/><rect x="60.7" y="25.1" width="4.2" height="2.6" fill="rgb(218, 197, 177)" opacity="0.58" transform="rotate(-40 60.7 25.1)"/><rect x="74.2" y="61.8" width="1.5" height="9.0" fill="rgb(174, 155, 149)" opacity="0.83" transform="rotate(-40 74.2 61.8)"/><rect x="54.8" y="70.5" width="3.4" height="2.4" fill="rgb(180, 152, 138)" opacity="0.78" transform="rotate(-40 54.8 70.5)"/><rect x="60.9" y="53.0" width="1.0" height="5.7" fill="rgb(175, 156, 140)" opacity="0.56" transform="rotate(-40 60.9 53.0)"/><rect x="35.5" y="71.7" width="3.4" height="3.2" fill="rgb(196, 157, 131)" opacity="0.69" transform="rotate(18 35.5 71.7)"/><rect x="121.8" y="72.4" width="8.9" height="1.2" fill="rgb(144, 146, 147)" opacity="0.79" transform="rotate(-40 121.8 72.4)"/><rect x="63.1" y="48.1" width="2.1" height="2.4" fill="rgb(193, 167, 153)" opacity="0.78" transform="rotate(18 63.1 48.1)"/><rect x="127.1" y="23.6" width="3.5" height="2.6" fill="rgb(199, 200, 201)" opacity="0.46" transform="rotate(18 127.1 23.6)"/><rect x="27.8" y="45.3" width="2.9" height="3.7" fill="rgb(208, 177, 150)" opacity="0.65" transform="rotate(-40 27.8 45.3)"/><rect x="57.8" y="37.9" width="8.7" height="3.6" fill="rgb(171, 144, 131)" opacity="0.55" transform="rotate(-40 57.8 37.9)"/><rect x="73.3" y="61.5" width="4.4" height="2.6" fill="rgb(115, 103, 103)" opacity="0.73" transform="rotate(18 73.3 61.5)"/><rect x="123.4" y="35.4" width="3.6" height="1.5" fill="rgb(148, 137, 129)" opacity="0.63" transform="rotate(-40 123.4 35.4)"/><rect x="129.1" y="51.2" width="4.0" height="2.0" fill="rgb(199, 201, 203)" opacity="0.62" transform="rotate(18 129.1 51.2)"/><rect x="131.5" y="63.2" width="6.2" height="2.2" fill="rgb(150, 140, 132)" opacity="0.55" transform="rotate(18 131.5 63.2)"/><rect x="95.9" y="18.5" width="2.3" height="7.1" fill="rgb(111, 102, 101)" opacity="0.69" transform="rotate(-40 95.9 18.5)"/><rect x="51.7" y="73.1" width="5.7" height="3.2" fill="rgb(154, 125, 112)" opacity="0.83" transform="rotate(18 51.7 73.1)"/><rect x="32.3" y="60.8" width="7.7" height="3.3" fill="rgb(145, 110, 99)" opacity="0.83" transform="rotate(108 32.3 60.8)"/><rect x="37.7" y="52.8" width="1.0" height="6.0" fill="rgb(148, 115, 104)" opacity="0.88" transform="rotate(-40 37.7 52.8)"/><rect x="101.7" y="25.4" width="4.6" height="1.6" fill="rgb(176, 166, 161)" opacity="0.60" transform="rotate(18 101.7 25.4)"/>
<path d="M104 0 L86 26 L91 28 L109 2Z" fill="#9a9fa4"/>
<path d="M88 27 L138 45 L138 49.5 L86 31.5Z" fill="#8f9499"/>
<path d="M60 16 L8 60 L12 63 L64 20Z" fill="#dcc2aa" opacity=".85"/>
<path d="M2 62 L40 80 L34 80.5 L0 66Z" fill="#d9b48e" opacity=".8"/>
<path d="M116 16 Q130 24 137 44" stroke="#b4b4b2" stroke-width="3.4" fill="none"/>
<path d="M100 2 Q124 8 143 18" stroke="#8f959b" stroke-width="2.2" fill="none"/>
<ellipse cx="17" cy="32" rx="14.6" ry="10.4" fill="#ee9f78"/><ellipse cx="17" cy="29.6" rx="13" ry="8" fill="#f9c9b0"/><ellipse cx="17" cy="29.6" rx="9" ry="5" fill="#fbdccc"/>
<ellipse cx="9" cy="13.5" rx="6.8" ry="4.8" fill="#fff6e6"/><ellipse cx="9" cy="15" rx="6.8" ry="4.2" fill="#ffe9c8" opacity=".7"/>
<ellipse cx="30" cy="7" rx="3.6" ry="3" fill="#fff0e0"/><ellipse cx="40" cy="10.5" rx="3.4" ry="3" fill="#fff0e4"/><ellipse cx="47.5" cy="6" rx="3.2" ry="2.8" fill="#fff6ee"/><ellipse cx="37" cy="3" rx="2.8" ry="2.3" fill="#ffeedd"/><ellipse cx="54" cy="2.5" rx="2.8" ry="2.3" fill="#fff"/><ellipse cx="15" cy="2" rx="3.6" ry="2.3" fill="#fff4da"/><ellipse cx="24" cy="1" rx="2.6" ry="1.6" fill="#fff4da"/>
<g fill="#fcfcfb"><ellipse cx="64" cy="8" rx="2.3" ry="2.5"/><ellipse cx="71" cy="10.5" rx="2.3" ry="2.5"/><ellipse cx="79" cy="12.5" rx="2.3" ry="2.5"/><ellipse cx="87.5" cy="15" rx="2.3" ry="2.5"/><ellipse cx="69" cy="4" rx="2.2" ry="2.3"/><ellipse cx="76" cy="6" rx="2.2" ry="2.3"/><ellipse cx="84" cy="8" rx="2.2" ry="2.3"/><ellipse cx="92" cy="10.5" rx="2.2" ry="2.3"/><ellipse cx="67.5" cy="18.5" rx="3.7" ry="3.5"/><ellipse cx="56" cy="14.5" rx="3.4" ry="2.5" fill="#f7e6d6"/></g>
<ellipse cx="122" cy="54.5" rx="5.4" ry="6" fill="#f6f1ea"/><ellipse cx="123" cy="56" rx="4" ry="4" fill="#e9d4c4" opacity=".7"/>
<rect x="116" y="68" width="13" height="11" fill="#e2dac6"/>
<g fill="#f3f4f2"><rect x="103" y="15" width="4.4" height="3.2" transform="rotate(-20 105 16)"/><rect x="109" y="20.5" width="4.4" height="3.2" transform="rotate(-20 111 22)"/><rect x="98" y="24" width="4.4" height="3.2" transform="rotate(-20 100 25)"/><rect x="112" y="13" width="4.4" height="3.2" transform="rotate(-20 114 14)"/><rect x="104" y="28" width="4.4" height="3.2" transform="rotate(-20 106 29)"/><rect x="96" y="16" width="3.6" height="2.8" transform="rotate(-20 98 17)"/></g>
<g fill="#5a8f44" opacity=".55"><ellipse cx="112" cy="4" rx="6" ry="2.6"/><ellipse cx="130" cy="3" rx="8" ry="3"/><ellipse cx="94" cy="20" rx="3" ry="3.4"/><ellipse cx="118" cy="19" rx="2.4" ry="3.4"/><ellipse cx="139" cy="30" rx="2.4" ry="8"/><ellipse cx="107" cy="70" rx="1.6" ry="6"/><ellipse cx="137" cy="68" rx="3" ry="8"/></g>
<rect x="36" y="35" width="16" height="7" fill="#cbbfb6" transform="rotate(18 44 38)"/>
<rect x="60" y="56" width="21" height="10" fill="#5b585e" transform="rotate(18 68 59)"/><rect x="56" y="52" width="10" height="7" fill="#d2ccc2" transform="rotate(18 60 55)"/>
<rect x="78" y="17" width="2.2" height="24" fill="#c7b4aa"/><rect x="88.5" y="15" width="2" height="25" fill="#bfaea6"/><rect x="73" y="22" width="2" height="18" fill="#b09a90"/>
<rect x="40" y="50" width="3" height="20" fill="#a08880"/><rect x="48" y="58" width="4" height="18" fill="#947e76"/><rect x="81" y="72" width="2.6" height="8" fill="#d8ccc0"/>
<path d="M92 52 L80 74 L84 76 L96 54Z" fill="#b9b9b8"/>
<path d="M110 60 L104 80 L108 80.5 L114 61Z" fill="#c4c6c4"/>
</g>
</g></svg><svg class="abs" style="left:566px;top:230.3px" width="143.3" height="62.5" viewBox="0 0 143.3 62.5">
<rect width="143.3" height="62.5" fill="#fff"/>
<path d="M17 62.5 L22 58 L30 55.5 L40 52.5 L48 48.5 L54 46.5 L60 43.5 L68 40 L76 35.5 L82 31 L85 28 L88 27 L91 28.5 L94 33 L96.5 39 L97.5 46 L96 52 L97 57 L100 62.5Z" fill="#ebebeb"/>
<path d="M100 62.5 L103 57 L106 54 L108 56 L110 61 L113 58 L116 57 L119 59 L122 56 L126 58 L128 62.5Z" fill="#eeeeee"/>
<path d="M52 46 L58 52 L66 57" stroke="#fff" stroke-width=".7" fill="none"/>
<path d="M36 59.5 L40 55.5 L43 53.5 L45.5 54 L48 57 L53 58.2 L58 60.5 L63 61.8 L70 62.3" stroke="#4a4a4a" stroke-width=".9" fill="none"/>
<path d="M97.5 62.5 L99.5 61 L101.5 62.5" stroke="#444" stroke-width=".9" fill="none"/>
<rect x="36" y="56.5" width="2.2" height="2.2" fill="#8a4fb0"/><rect x="38.8" y="55" width="2" height="2" fill="#8a4fb0"/>
<rect x="0" y="5.8" width="143.3" height="3.4" fill="#1b74ba"/>
<g fill="#d6e6f4"><rect x="47" y="7" width="12" height=".9"/><rect x="64" y="7" width="15" height=".9"/><rect x="84" y="7" width="11" height=".9"/></g>
<circle cx="30.8" cy="3" r="1.7" fill="none" stroke="#5a3f9a" stroke-width=".9"/><rect x="33.5" y="1.8" width="9" height="2.2" fill="#3a3560"/>
<rect x="74.5" y="2.3" width="8" height="1.2" fill="#cfe2cf"/><rect x="84.5" y="2.3" width="4" height="1.2" fill="#b8b8c0"/><rect x="90.5" y="2.3" width="3.5" height="1.2" fill="#d0d0d0"/>
<rect x="95.5" y="2" width="18.8" height="1.7" fill="#3d9ad6"/>
<rect x="30" y="11.3" width="18" height=".9" fill="#c9a0d8"/>
<rect x="8.8" y="15.8" width="124.2" height="6.4" fill="#f3f3f3"/>
<g fill="#fff"><rect x="9.8" y="18.5" width="24" height="3"/><rect x="41.8" y="18.5" width="24" height="3"/><rect x="71" y="18.5" width="13" height="3"/><rect x="87" y="18.5" width="13" height="3"/></g>
<g fill="#999"><rect x="10" y="16.8" width="2.5" height=".7"/><rect x="42" y="16.8" width="1.5" height=".7"/><rect x="71" y="16.8" width="2.5" height=".7"/><rect x="87" y="16.8" width="2.5" height=".7"/><rect x="11" y="19.7" width="3" height=".6"/><rect x="43" y="19.7" width="3" height=".6"/><rect x="72" y="19.7" width="5" height=".6"/><rect x="88.5" y="19.7" width="3" height=".6"/></g>
<g fill="#7d3fa6"><rect x="34.6" y="18.6" width="2.3" height="2.7" rx=".5"/><rect x="38.3" y="18.6" width="2.3" height="2.7" rx=".5"/><rect x="66.7" y="18.6" width="2.3" height="2.7" rx=".5"/><rect x="102.7" y="18.7" width="29.5" height="2.6"/></g>
<rect x="9" y="24.4" width="27" height=".8" fill="#e9a6c0"/>
<rect x="10" y="29" width="8" height="2" rx="1" fill="#fff" stroke="#888" stroke-width=".35"/>
<rect x="10" y="36.3" width="8" height="2" rx="1" fill="#c9a5dd" stroke="#8a4fb0" stroke-width=".35"/>
<g fill="#555"><rect x="19" y="29.3" width="14" height=".7"/><rect x="20.5" y="32.6" width="13" height=".9"/><rect x="20.5" y="37" width="22" height=".9"/><rect x="20.5" y="39.6" width="22" height=".9"/></g>
<g fill="#aaa"><rect x="11" y="32.8" width="6" height=".7"/><rect x="11" y="40" width="6" height=".7"/><rect x="19" y="34.7" width="24" height=".35" fill="#b58fd0"/><rect x="21" y="41.6" width="18" height=".6"/></g>
<g fill="#888" opacity=".4"><rect x="76" y="49.5" width="12" height=".7"/><rect x="84" y="59.4" width="13" height=".7"/><rect x="28" y="54.8" width="8" height=".6"/><rect x="26" y="57" width="9" height=".6"/><rect x="47" y="53" width="5" height=".6"/><rect x="24" y="61.4" width="9" height=".6"/></g>
<g fill="#8a4fb0"><rect x="138.4" y="32" width="3.6" height="3.6" rx=".7"/><rect x="138.4" y="40.6" width="3.6" height="3.6" rx=".7"/></g>
<g fill="#c9b0dc"><rect x="139" y="36.3" width="2.4" height=".6"/><rect x="139" y="44.9" width="2.4" height=".6"/><rect x="139.2" y="32.8" width="2" height=".8" fill="#e8d8f2"/></g>
</svg>
<svg class="abs" style="left:773.7px;top:230.3px" width="143.3" height="62.5" viewBox="0 0 143.3 62.5">
<rect width="143.3" height="62.5" fill="#fff"/>
<path d="M17 62.5 L22 58 L30 55.5 L40 52.5 L48 48.5 L54 46.5 L60 43.5 L68 40 L76 35.5 L82 31 L85 28 L88 27 L91 28.5 L94 33 L96.5 39 L97.5 46 L96 52 L97 57 L100 62.5Z" fill="#ebebeb"/>
<path d="M100 62.5 L103 57 L106 54 L108 56 L110 61 L113 58 L116 57 L119 59 L122 56 L126 58 L128 62.5Z" fill="#eeeeee"/>
<path d="M52 46 L58 52 L66 57" stroke="#fff" stroke-width=".7" fill="none"/>
<path d="M36 59.5 L40 55.5 L43 53.5 L45.5 54 L48 57 L53 58.2 L58 60.5 L63 61.8 L70 62.3" stroke="#4a4a4a" stroke-width=".9" fill="none"/>
<path d="M97.5 62.5 L99.5 61 L101.5 62.5" stroke="#444" stroke-width=".9" fill="none"/>
<rect x="36" y="56.5" width="2.2" height="2.2" fill="#8a4fb0"/><rect x="38.8" y="55" width="2" height="2" fill="#8a4fb0"/>
<rect x="0" y="5.8" width="143.3" height="3.4" fill="#1b74ba"/>
<g fill="#d6e6f4"><rect x="47" y="7" width="12" height=".9"/><rect x="64" y="7" width="15" height=".9"/><rect x="84" y="7" width="11" height=".9"/></g>
<circle cx="30.8" cy="3" r="1.7" fill="none" stroke="#5a3f9a" stroke-width=".9"/><rect x="33.5" y="1.8" width="9" height="2.2" fill="#3a3560"/>
<rect x="74.5" y="2.3" width="8" height="1.2" fill="#cfe2cf"/><rect x="84.5" y="2.3" width="4" height="1.2" fill="#b8b8c0"/><rect x="90.5" y="2.3" width="3.5" height="1.2" fill="#d0d0d0"/>
<rect x="95.5" y="2" width="18.8" height="1.7" fill="#3d9ad6"/>
<rect x="30" y="11.3" width="18" height=".9" fill="#c9a0d8"/>
<rect x="8.8" y="15.8" width="124.2" height="6.4" fill="#f3f3f3"/>
<g fill="#fff"><rect x="9.8" y="18.5" width="24" height="3"/><rect x="41.8" y="18.5" width="24" height="3"/><rect x="71" y="18.5" width="13" height="3"/><rect x="87" y="18.5" width="13" height="3"/></g>
<g fill="#999"><rect x="10" y="16.8" width="2.5" height=".7"/><rect x="42" y="16.8" width="1.5" height=".7"/><rect x="71" y="16.8" width="2.5" height=".7"/><rect x="87" y="16.8" width="2.5" height=".7"/><rect x="11" y="19.7" width="3" height=".6"/><rect x="43" y="19.7" width="3" height=".6"/><rect x="72" y="19.7" width="5" height=".6"/><rect x="88.5" y="19.7" width="3" height=".6"/></g>
<g fill="#7d3fa6"><rect x="34.6" y="18.6" width="2.3" height="2.7" rx=".5"/><rect x="38.3" y="18.6" width="2.3" height="2.7" rx=".5"/><rect x="66.7" y="18.6" width="2.3" height="2.7" rx=".5"/><rect x="102.7" y="18.7" width="29.5" height="2.6"/></g>
<rect x="9" y="24.4" width="27" height=".8" fill="#e9a6c0"/>
<rect x="10" y="29" width="8" height="2" rx="1" fill="#fff" stroke="#888" stroke-width=".35"/>
<rect x="10" y="36.3" width="8" height="2" rx="1" fill="#c9a5dd" stroke="#8a4fb0" stroke-width=".35"/>
<g fill="#555"><rect x="19" y="29.3" width="14" height=".7"/><rect x="20.5" y="32.6" width="13" height=".9"/><rect x="20.5" y="37" width="22" height=".9"/><rect x="20.5" y="39.6" width="22" height=".9"/></g>
<g fill="#aaa"><rect x="11" y="32.8" width="6" height=".7"/><rect x="11" y="40" width="6" height=".7"/><rect x="19" y="34.7" width="24" height=".35" fill="#b58fd0"/><rect x="21" y="41.6" width="18" height=".6"/></g>
<g fill="#888" opacity=".4"><rect x="76" y="49.5" width="12" height=".7"/><rect x="84" y="59.4" width="13" height=".7"/><rect x="28" y="54.8" width="8" height=".6"/><rect x="26" y="57" width="9" height=".6"/><rect x="47" y="53" width="5" height=".6"/><rect x="24" y="61.4" width="9" height=".6"/></g>
<g fill="#8a4fb0"><rect x="138.4" y="32" width="3.6" height="3.6" rx=".7"/><rect x="138.4" y="40.6" width="3.6" height="3.6" rx=".7"/></g>
<g fill="#c9b0dc"><rect x="139" y="36.3" width="2.4" height=".6"/><rect x="139" y="44.9" width="2.4" height=".6"/><rect x="139.2" y="32.8" width="2" height=".8" fill="#e8d8f2"/></g>
</svg>
<svg class="abs" style="left:151.6px;top:380.2px" width="143.2" height="74.5" viewBox="0 0 143 74.3" preserveAspectRatio="none">
<defs><filter id="rb" x="-10%" y="-10%" width="120%" height="120%"><feGaussianBlur stdDeviation=".6"/></filter>
<linearGradient id="rg1" x1="0" y1="0" x2="0" y2="1"><stop offset="0" stop-color="#6d8b84"/><stop offset="1" stop-color="#82a098"/></linearGradient>
<clipPath id="rc"><rect x=".6" y=".6" width="141.8" height="73.1"/></clipPath></defs>
<rect width="143" height="74.3" fill="#f6f6f6"/>
<g clip-path="url(#rc)"><g filter="url(#rb)">
<rect x="-2" y="-2" width="147" height="78" fill="#161d25"/>
<path d="M22 0 L118 0 L108 12 Q71 -3 34 12 Z" fill="#4d6676"/>
<path d="M40 0 L98 0 L100 6 Q71 -2 42 7Z" fill="#7993a0" opacity=".75"/>
<g stroke="#1a2430" stroke-width=".8" opacity=".8"><path d="M30 0 L40 10 M44 0 L50 6 M58 0 L60 4 M84 0 L82 4 M98 0 L92 6 M112 0 L102 10"/></g>
<path d="M112 0 L143 0 L143 8 L116 22 Z" fill="#1e2b38"/><path d="M0 0 L26 0 L40 12 L30 18 L0 6Z" fill="#1b2632"/>
<g stroke="#3a4c5c" stroke-width=".5" opacity=".8"><path d="M2 0 L28 14 M10 0 L32 11 M18 0 L36 9 M141 0 L114 14 M133 0 L110 11 M125 0 L108 9"/></g>
<path d="M38 26 Q40 13 55 8.5 Q71 5 87 8.5 Q102 13 104 26 Z" fill="#7d5044"/>
<path d="M46 24 Q50 13 71 10.5 Q92 13 96 24Z" fill="#8d5e50"/>
<g stroke="#33363f" stroke-width=".55" opacity=".85"><path d="M49 9V26M56 7V26M63 6V26M79 6V26M86 7V26M93 9V26M40 20H102M43 14.5H99"/></g>
<path d="M36 28 Q40 7 71 4.5 Q102 7 107 28" fill="none" stroke="#222d39" stroke-width="2.4"/>
<circle cx="68.2" cy="17" r="3.3" fill="#f4eed6" stroke="#5a4a30" stroke-width=".5"/>
<rect x="50" y="24.6" width="38" height="1.1" fill="#8d6fae" opacity=".7"/>
<rect x="40" y="26" width="64" height="4" fill="#1d2430"/>
<rect x="59" y="29.5" width="34" height="3.4" fill="#2a3f60"/><rect x="70" y="30" width="12" height="2.4" fill="#7f8050"/>
<path d="M0 9 L52 30 L52 34 L0 18Z" fill="#2a353e"/><path d="M143 7 L96 30 L96 34 L143 16Z" fill="#38434c"/>
<path d="M16 17 L23 19.5 L23 20.8 L16 18.3Z M34 24 L40 26 L40 27 L34 25Z" fill="#c4cccc"/><path d="M126 17 L133 14 L133 15.4 L126 18.4Z M110 24.5 L116 22 L116 23 L110 25.5Z" fill="#d5dbd8"/>
<path d="M0 19.5 L14 23 L46 32 L58 36 L58 38 L0 33Z" fill="#8e94a4"/><path d="M0 25.5 L50 35.8 L50 37 L0 28.6Z" fill="#4b5b96"/><path d="M0 29 L50 37 L52 39 L0 33.4Z" fill="#c9c7b6"/>
<path d="M0 33 L56 38.5 L56 45 L0 48Z" fill="#131a3e"/>
<g fill="#0b1026" opacity=".8"><path d="M6 36 L14 36.6 L14 42.6 L6 43Z M18 37 L26 37.5 L26 42.2 L18 42.6Z M30 38 L37 38.4 L37 41.8 L30 42.2Z M41 38.8 L47 39 L47 41.6 L41 41.8Z"/></g>
<path d="M0 47.4 L56 43.6 L56 44.8 L0 49.6Z" fill="#cfae3a"/>
<path d="M0 49.6 L56 44.8 L60 46 L0 56Z" fill="#a3a196"/>
<path d="M143 24 L128 27.5 L100 36.5 L92 39 L92 41 L143 33Z" fill="#8a90a0"/><path d="M143 28.6 L100 37.8 L100 39 L143 31.8Z" fill="#4b5b96"/><path d="M143 31.6 L98 39 L96 41 L143 36.4Z" fill="#c9c7b6"/>
<path d="M143 35 L94 40 L94 45 L143 48Z" fill="#141c42"/>
<g fill="#0b1026" opacity=".8"><path d="M137 37 L129 37.6 L129 43 L137 43.5Z M125 38 L117 38.5 L117 42.6 L125 43Z M113 38.8 L106 39.2 L106 42.2 L113 42.5Z"/></g>
<path d="M143 47 L98 43.5 L98 44.7 L143 49.6Z" fill="#cfae3a"/>
<path d="M143 49.6 L98 44.7 L94 46 L143 57Z" fill="#a3a196"/>
<rect x="50" y="33" width="4.5" height="12" fill="#464b50"/><rect x="99.5" y="33" width="4.5" height="12" fill="#50545a"/>
<path d="M60 38 L92 38 L106 74.3 L40 74.3Z" fill="#a2a5a4"/>
<path d="M66 40 L80 40 L82 52 L64 52Z" fill="#bfc0bc"/>
<path d="M0 56 L60 43 L66 43 L66 52 L44 74.3 L0 74.3Z" fill="url(#rg1)"/>
<path d="M143 57 L94 43 L84 43 L86 52 L108 74.3 L143 74.3Z" fill="url(#rg1)"/>
<path d="M0 55.4 L60 42.5 L61 43.8 L0 57.6Z" fill="#b9c8c0"/><path d="M143 56.4 L92 42.5 L91 43.8 L143 58.6Z" fill="#b9c8c0"/>
<path d="M0 57.6 L0 67 L62 47.5 L60 43.8Z" fill="#3c5550" opacity=".9"/><path d="M143 58.6 L143 67 L90 47.5 L92 43.8Z" fill="#3a524d" opacity=".9"/>
<path d="M0 67 L62 47.5 L66 50 L22 74.3 L0 74.3Z" fill="#9fb8ae" opacity=".8"/><path d="M143 67 L90 47.5 L86 50 L126 74.3 L143 74.3Z" fill="#9fb8ae" opacity=".8"/>
<g stroke="#4b635d" stroke-width=".9" opacity=".75"><path d="M14 62 V74 M30 57 V72 M44 53 V64 M54 50 V58 M129 62 V74 M113 57 V72 M100 53 V64 M91 50 V58"/></g>
<path d="M70 52 L81 52 L83 74.3 L68 74.3Z" fill="#8f9190"/><path d="M68 52 L70 52 L68 74.3 L64 74.3Z M81 52 L83 52 L87 74.3 L83 74.3Z" fill="#cfd1ce"/>
<path d="M20 74.3 L30 67 L34 74.3Z M112 74.3 L118 66 L128 74.3Z" fill="#d5dbd6" opacity=".8"/>
<path d="M18 74.3 L18 69 L26 66 L26 74.3Z" fill="#2c403c" opacity=".8"/><path d="M118 74.3 L118 66 L125 69 L125 74.3Z" fill="#2c403c" opacity=".7"/>
<rect x="73" y="37" width="2" height="5" fill="#b8623a"/><rect x="76" y="40" width="1.6" height="4" fill="#37467e"/><rect x="66" y="36" width="1.4" height="4" fill="#222"/><rect x="84" y="37" width="1.4" height="4" fill="#333"/>
</g><rect x=".6" y=".6" width="141.8" height="73.1" fill="#070b12" opacity=".22"/></g>
</svg>
<svg class="abs" style="left:359px;top:377.5px" width="143" height="80.5" viewBox="0 0 143 80.5">
<rect width="143" height="80.5" fill="#191a1d"/>
<g stroke="#2b2d31" stroke-width=".35"><path d="M10 8H141M10 12H141M10 16H141M10 20H141M10 24H141M10 28H141M10 32H141M10 36H141M25 6V37M40 6V37M55 6V37M71 6V37M86 6V37M101 6V37M116 6V37M131 6V37"/><path d="M5 54H109M5 58H109M5 62H109M5 66H109M5 70H109M5 74H109M14 52V75M23 52V75M32 52V75M40 52V75M49 52V75M58 52V75M66 52V75M75 52V75M84 52V75M93 52V75M101 52V75"/><path d="M118 56H142M118 60H142M118 64H142M118 68H142"/></g>
<path d="M0 43.2H143M114 43.2V80.5" stroke="#26282c" stroke-width=".9"/>
<g fill="#8b8d91"><rect x="109" y="3" width="8" height="1.1"/><rect x="52" y="45.3" width="9" height="1.1"/><g opacity=".75"><rect x="2" y="7.6" width="6.5" height=".8"/><rect x="2" y="11.6" width="6.5" height=".8"/><rect x="2" y="15.6" width="6.5" height=".8"/><rect x="2" y="19.6" width="6.5" height=".8"/><rect x="2" y="23.6" width="6.5" height=".8"/><rect x="2" y="27.6" width="6.5" height=".8"/><rect x="2" y="31.6" width="6.5" height=".8"/><rect x="2" y="35.6" width="6.5" height=".8"/>
<rect x="18" y="38.4" width="8" height=".8"/><rect x="33" y="38.4" width="8" height=".8"/><rect x="48" y="38.4" width="8" height=".8"/><rect x="64" y="38.4" width="8" height=".8"/><rect x="79" y="38.4" width="8" height=".8"/><rect x="94" y="38.4" width="8" height=".8"/><rect x="109" y="38.4" width="8" height=".8"/><rect x="124" y="38.4" width="8" height=".8"/><rect x="138" y="38.4" width="3" height=".8"/>
<rect x="5" y="40.6" width="6" height=".7"/>
<rect x="2.5" y="53.6" width="2" height=".7"/><rect x="2.5" y="57.6" width="2" height=".7"/><rect x="2.5" y="61.6" width="2" height=".7"/><rect x="2.5" y="65.6" width="2" height=".7"/><rect x="2.5" y="69.6" width="2" height=".7"/><rect x="2.5" y="73.6" width="2" height=".7"/>
<rect x="7" y="76.3" width="3.5" height=".8"/><rect x="15.6" y="76.3" width="3.5" height=".8"/><rect x="24.2" y="76.3" width="3.5" height=".8"/><rect x="32.8" y="76.3" width="3.5" height=".8"/><rect x="41.4" y="76.3" width="3.5" height=".8"/><rect x="50" y="76.3" width="3.5" height=".8"/><rect x="58.6" y="76.3" width="3.5" height=".8"/><rect x="67.2" y="76.3" width="3.5" height=".8"/><rect x="75.8" y="76.3" width="3.5" height=".8"/><rect x="84.4" y="76.3" width="3.5" height=".8"/><rect x="93" y="76.3" width="3.5" height=".8"/><rect x="101.6" y="76.3" width="3.5" height=".8"/>
<rect x="115.5" y="51.6" width="2" height=".7"/><rect x="115.5" y="55.6" width="2" height=".7"/><rect x="115.5" y="59.6" width="2" height=".7"/><rect x="115.5" y="63.6" width="2" height=".7"/><rect x="115.5" y="67.6" width="2" height=".7"/><rect x="115.5" y="71.6" width="2" height=".7"/><rect x="116" y="74.6" width="26" height=".7"/></g></g>
<path d="M10.0 29.7 L11.0 29.1 L12.0 29.8 L13.0 28.5 L14.0 29.1 L15.0 29.8 L16.0 30.2 L17.0 32.0 L18.0 32.2 L19.0 31.9 L20.0 30.2 L21.0 29.3 L22.0 28.9 L23.0 28.9 L24.0 27.0 L25.0 26.5 L26.0 27.6 L27.0 28.6 L28.0 28.3 L29.0 28.4 L30.0 29.9 L31.0 27.8 L32.0 28.8 L33.0 27.4 L34.0 26.8 L35.0 26.3 L36.0 27.5 L37.0 29.2 L38.0 28.9 L39.0 29.1 L40.0 28.8 L41.0 27.8 L42.0 27.6 L43.0 26.2 L44.0 25.7 L45.0 26.2 L46.0 27.3 L47.0 27.1 L48.0 27.2 L49.0 28.3 L50.0 28.7 L51.0 29.0 L52.0 30.5 L53.0 29.5 L54.0 27.7 L55.0 27.4 L56.0 26.4 L57.0 26.2 L58.0 26.4 L59.0 26.1 L60.0 27.9 L61.0 25.8 L62.0 25.9 L63.0 26.0 L64.0 24.4 L65.0 25.1 L66.0 24.5 L67.0 25.8 L68.0 26.1 L69.0 26.0 L70.0 26.7 L71.0 26.4 L72.0 27.9 L73.0 28.4 L74.0 29.1 L75.0 28.2 L76.0 28.1 L77.0 27.6 L78.0 26.0 L79.0 25.8 L80.0 24.2 L81.0 24.9 L82.0 24.3 L83.0 25.1 L84.0 25.1 L85.0 24.4 L86.0 24.8 L87.0 24.6 L88.0 22.6 L89.0 22.7 L90.0 21.4 L91.0 21.8 L92.0 22.2 L93.0 24.0 L94.0 23.3 L95.0 24.5 L96.0 25.8 L97.0 27.7 L98.0 27.2 L99.0 28.4 L100.0 29.1 L101.0 30.2 L102.0 30.6 L103.0 29.7 L104.0 27.6 L105.0 26.8 L106.0 25.7 L107.0 25.4 L108.0 24.3 L109.0 21.6 L110.0 20.4 L111.0 21.0 L112.0 21.5 L113.0 22.5 L114.0 23.2 L115.0 21.8 L116.0 20.6 L117.0 20.6 L118.0 19.8 L119.0 19.4 L120.0 19.3 L121.0 18.1 L122.0 17.0 L123.0 16.2 L124.0 15.3 L125.0 13.2 L126.0 13.7 L127.0 12.8 L128.0 12.2 L129.0 12.5 L130.0 12.3 L131.0 12.8 L132.0 12.6 L133.0 13.9 L134.0 13.2 L135.0 13.7 L136.0 14.5 L137.0 14.9 L138.0 15.7 L139.0 15.7 L140.0 16.1" fill="none" stroke="#55782f" stroke-width=".7" stroke-linejoin="round"/>
<path d="M5.6 69 L5.6 68.5 L6.5 66.5 L7.4 65.4 L8.3 64.0 L9.2 64.8 L10.1 65.6 L11.0 64.3 L11.9 62.4 L12.8 61.8 L13.7 61.2 L14.6 60.2 L15.5 61.1 L16.4 61.4 L17.3 60.8 L18.2 60.8 L19.1 59.5 L20.0 58.8 L20.9 58.4 L21.8 57.9 L22.7 58.4 L23.6 57.2 L24.5 56.6 L25.4 57.4 L26.3 56.4 L27.2 55.4 L28.1 55.5 L29.0 54.3 L29.9 54.6 L30.8 55.0 L31.7 54.6 L32.6 54.9 L33.5 55.2 L34.4 55.9 L35.3 56.0 L36.2 57.1 L37.1 57.0 L38.0 57.1 L38.9 56.3 L39.8 57.9 L40.7 60.8 L41.6 62.6 L42.5 63.7 L43.4 64.8 L44.3 65.7 L45.2 66.5 L46.1 66.4 L47.0 67.5 L47.9 68.2 L48.8 68.6 L49.7 69.0 L50.6 69.5 L51.5 69.6 L52.4 70.3 L53.3 70.8 L54.2 70.1 L55.1 70.8 L56.0 70.1 L56.9 68.7 L57.8 65.8 L58.7 65.3 L59.6 65.7 L60.5 65.9 L61.4 65.9 L62.3 66.0 L63.2 66.1 L64.1 66.3 L65.0 66.1 L65.9 66.7 L66.8 67.1 L67.7 66.3 L68.6 66.2 L69.5 64.9 L70.4 63.8 L71.3 63.6 L72.2 63.1 L73.1 62.4 L74.0 62.4 L74.9 60.9 L75.8 62.0 L76.7 62.9 L77.6 62.7 L78.5 63.1 L79.4 63.5 L80.3 61.9 L81.2 60.0 L82.1 59.6 L83.0 59.3 L83.9 60.1 L84.8 60.1 L85.7 59.3 L86.6 60.4 L87.5 60.6 L88.4 60.0 L89.3 59.4 L90.2 59.8 L91.1 60.1 L92.0 60.8 L92.9 62.0 L93.8 61.4 L94.7 61.1 L95.6 61.3 L96.5 60.2 L97.4 60.3 L98.3 59.9 L99.2 58.9 L100.1 58.8 L101.0 58.7 L101.9 59.3 L102.8 60.5 L103.7 61.4 L104.6 63.2 L105.5 64.4 L106.4 67.0 L107.3 67.7 L108 69Z" fill="#7cc36b"/>
<path d="M118.6 72.8V71.6H125.7V65.7H133.2V61H140.7V72.8Z" fill="#e0a14e"/>
<path d="M118.6 72.8H141" stroke="#f1b863" stroke-width=".4"/>
</svg><svg class="abs" style="left:566px;top:377.5px" width="143.5" height="80.5" viewBox="0 0 143.5 80.5">
<rect width="143.5" height="80.5" fill="#04895a"/>
<rect x="2" y="2" width="139.5" height="76.5" rx="9" fill="none" stroke="#bfe3d2" stroke-width=".55"/>
<path d="M100.7 2V78.5" stroke="#bfe3d2" stroke-width=".55"/>
<text x="120.6" y="54.3" font-family="Liberation Sans,sans-serif" font-weight="bold" font-size="42" fill="#fff" text-anchor="middle">A</text>
<text x="49.8" y="71" font-family="DejaVu Sans,Liberation Sans,sans-serif" font-weight="bold" font-size="10.2" fill="#fff" text-anchor="middle" textLength="80.5" lengthAdjust="spacingAndGlyphs">Muster Station</text>
<g fill="#f6fbf8">
<circle cx="42.5" cy="20.3" r="3.7"/><path d="M35 35 Q35 25.5 42.5 25.5 Q47 25.5 48 29 L44 36 Z"/>
<circle cx="57.5" cy="20.3" r="3.7"/><path d="M65 35 Q65 25.5 57.5 25.5 Q53 25.5 52 29 L56 36Z"/>
</g>
<circle cx="50" cy="25.6" r="5.1" fill="#04895a"/><path d="M41.5 42 Q41.5 30.5 50 30.5 Q58.5 30.5 58.5 42Z" fill="#04895a" stroke="#04895a" stroke-width="1.6"/>
<g fill="#fff"><circle cx="50" cy="25.6" r="4.1"/><path d="M42.6 38.5 Q42.6 31 50 31 Q57.4 31 57.4 38.5 Q57.4 41 54.5 41 L45.5 41 Q42.6 41 42.6 38.5Z"/></g>
<g fill="#fff"><path d="M28.2 9.8 L30.7 7.3 L34.0 10.6 L36.5 8.1 L36.5 16.3 L28.3 16.3 L30.8 13.8 L27.5 10.5Z"/><path d="M72.4 9.8 L69.9 7.3 L66.6 10.6 L64.1 8.1 L64.1 16.3 L72.3 16.3 L69.8 13.8 L73.1 10.5Z"/><path d="M28.2 49.8 L30.7 52.3 L34.0 49.0 L36.5 51.5 L36.5 43.3 L28.3 43.3 L30.8 45.8 L27.5 49.1Z"/><path d="M72.4 49.8 L69.9 52.3 L66.6 49.0 L64.1 51.5 L64.1 43.3 L72.3 43.3 L69.8 45.8 L73.1 49.1Z"/></g>
</svg>
<svg class="abs" style="left:773.6px;top:380.2px" width="143.2" height="74.5" viewBox="0 0 143 74.3" preserveAspectRatio="none">
<defs><filter id="fb" x="-10%" y="-10%" width="120%" height="120%"><feGaussianBlur stdDeviation=".5"/></filter>
<clipPath id="fc"><rect x=".5" y=".5" width="142" height="73.3"/></clipPath></defs>
<rect width="143" height="74.3" fill="#f7f7f7"/>
<g clip-path="url(#fc)"><g filter="url(#fb)">
<rect x="-2" y="-2" width="147" height="78" fill="#efebe8"/>
<path d="M118 0 L143 0 L143 32 L132 26 L122 10Z" fill="#2b5a86"/>
<path d="M0 34 L6 38 L13 50 L16 76 L0 76Z" fill="#3366a0"/>
<path d="M0 0 L72 0 L64 8 L12 42 L0 36Z" fill="#e4bd90"/>
<path d="M0 0 L18 0 Q22 8 18 16 Q10 24 0 22Z" fill="#8a4a12"/><path d="M2 4 Q10 2 14 8 Q12 16 4 18Z" fill="#c27a22"/>
<path d="M98 0 L118 0 L122 10 L112 18 L94 10Z" fill="#c9964e"/>
<g fill="#6c9a4a"><path d="M68 6 L74 3 L72 10Z"/><path d="M90 17 L98 16 L95 20Z"/><path d="M110 24 L118 30 L112 31Z"/><path d="M76 53 L84 47 L86 55Z"/><path d="M54 44 L60 43 L57 47Z"/><path d="M50 63 L56 58 L58 65Z"/><path d="M10 44 L18 42 L14 50Z"/><path d="M94 64 L100 62 L98 69Z"/><path d="M120 60 L126 58 L124 63Z"/><path d="M22 7 L44 3 L48 12 L30 22 L22 20Z" opacity=".75"/></g>
<g fill="#d8563a"><circle cx="64" cy="10" r="2.3"/><circle cx="50" cy="46" r="2.6"/><circle cx="70" cy="54" r="2.6"/><circle cx="124" cy="18" r="2.4"/><circle cx="117" cy="44" r="2"/><circle cx="46" cy="65" r="2"/><circle cx="88" cy="3" r="2"/><circle cx="104" cy="2" r="2.2"/></g>
<g fill="none" stroke="#e2a898" stroke-width=".5"><circle cx="28" cy="36" r="2"/><circle cx="70" cy="42" r="2"/><circle cx="108" cy="17" r="2"/><circle cx="118" cy="52" r="2"/><circle cx="58" cy="70" r="2"/><circle cx="28" cy="58" r="2"/><circle cx="40" cy="32" r="2"/></g>
<ellipse cx="36" cy="13" rx="13" ry="8.5" fill="#f3f1ec" transform="rotate(-12 36 13)"/><circle cx="34" cy="9" r="3.6" fill="#f6b52a"/>
<ellipse cx="56" cy="3" rx="8" ry="5" fill="#f0eee8"/><circle cx="56" cy="1" r="3" fill="#f6b52a"/>
<circle cx="79" cy="9" r="7.4" fill="#e9e5df"/><circle cx="79" cy="9" r="5.6" fill="#c9aa84"/>
<circle cx="97" cy="4" r="4.6" fill="#a56a32"/><circle cx="97" cy="4" r="3" fill="#f4efe8"/>
<circle cx="109" cy="9" r="5" fill="#a87434"/><circle cx="109" cy="8.5" r="3.3" fill="#6e6a40"/>
<circle cx="134" cy="13" r="8" fill="#f1d9a0" opacity=".9"/><circle cx="134" cy="12" r="5.8" fill="#f7bd42"/>
<ellipse cx="122" cy="1" rx="9" ry="3" fill="#f3f1ee"/>
<circle cx="60.6" cy="28.5" r="14.6" fill="#fbfaf7" stroke="#8d8a84" stroke-width=".5"/><circle cx="60.6" cy="28.5" r="10.5" fill="#f1ede6"/>
<ellipse cx="60" cy="29" rx="9" ry="8" fill="#d9a55c"/><ellipse cx="59" cy="26" rx="7.5" ry="6" fill="#f6f3ef"/>
<g fill="#2b3a62"><circle cx="56" cy="25" r="1.3"/><circle cx="60" cy="23" r="1.3"/><circle cx="63" cy="27" r="1.3"/><circle cx="58" cy="30" r="1.3"/><circle cx="62" cy="32" r="1.3"/><circle cx="54" cy="29" r="1.2"/><circle cx="65" cy="23.5" r="1.2"/></g>
<circle cx="96" cy="37.5" r="18.2" fill="#fbfaf7" stroke="#77746e" stroke-width=".6"/><circle cx="96" cy="37.5" r="15.4" fill="#efe9df"/>
<circle cx="96" cy="37.5" r="13.6" fill="#dcae62"/><circle cx="96" cy="37.5" r="13.6" fill="none" stroke="#f0d8a8" stroke-width="1.6" stroke-dasharray="2 2"/>
<g fill="#e0433c"><ellipse cx="92" cy="35" rx="3.6" ry="3"/><ellipse cx="99" cy="33" rx="3" ry="2.6"/><ellipse cx="98" cy="40" rx="3.2" ry="2.8"/><ellipse cx="103" cy="37" rx="2.6" ry="2.4"/><ellipse cx="91" cy="41" rx="2.4" ry="2"/></g>
<g fill="#26345c"><circle cx="87" cy="36" r="1.5"/><circle cx="90" cy="44" r="1.5"/><circle cx="95" cy="46" r="1.5"/><circle cx="103" cy="43" r="1.5"/><circle cx="102" cy="31" r="1.5"/><circle cx="96" cy="29" r="1.5"/><circle cx="106" cy="40" r="1.4"/><circle cx="100" cy="47" r="1.4"/><circle cx="88" cy="31" r="1.3"/></g>
<circle cx="132.5" cy="42" r="12.6" fill="#fbfaf7" stroke="#77746e" stroke-width=".55"/><circle cx="132.5" cy="42" r="9.6" fill="#f1ede7"/>
<path d="M126 44 L140 38 L141 46 L130 49Z" fill="#d8a85c"/><g fill="#e0433c"><circle cx="131" cy="42" r="2.2"/><circle cx="139" cy="40" r="2.4"/></g><g fill="#26345c"><circle cx="135" cy="42" r="1.3"/><circle cx="134" cy="46" r="1.3"/></g>
<circle cx="35.5" cy="47.5" r="9.6" fill="#6a3f36"/><circle cx="35.5" cy="47.5" r="8.2" fill="#c9282c"/>
<g fill="#e8484a"><ellipse cx="31" cy="45" rx="3" ry="3.6"/><ellipse cx="39" cy="44" rx="3" ry="2.6"/><ellipse cx="38" cy="51" rx="3.2" ry="2.8"/></g><path d="M33 48 L37 45 L38 49 L35 51Z" fill="#3f6a34"/><path d="M30 52 L33 54 L30 55Z" fill="#8a1a20"/>
<ellipse cx="27" cy="52" rx="7" ry="4" fill="#e3dfda" opacity=".8"/>
<circle cx="60" cy="57" r="7.2" fill="#f3dfa8"/><circle cx="60" cy="57" r="6" fill="#f8c252"/>
<circle cx="9" cy="66.5" r="8.6" fill="#efdfb0"/><circle cx="9" cy="66.5" r="6.6" fill="#f7c04a"/>
<circle cx="109" cy="66.5" r="7.8" fill="#efebe5" stroke="#8a867e" stroke-width=".4"/><circle cx="109" cy="66.5" r="5.9" fill="#c8ab86"/>
<circle cx="36" cy="77" r="13.4" fill="#fbfaf7" stroke="#77746e" stroke-width=".55"/><ellipse cx="36" cy="75" rx="6" ry="3.6" fill="#d8a85c"/><circle cx="36" cy="73" r="1.3" fill="#26345c"/><circle cx="33" cy="72" r="1.3" fill="#e0433c"/>
<circle cx="80" cy="79" r="18.4" fill="#fbfaf7" stroke="#77746e" stroke-width=".6"/><circle cx="80" cy="79" r="15" fill="#efe9df"/><ellipse cx="80" cy="74" rx="13" ry="6.6" fill="#dcae62"/>
<g fill="#26345c"><circle cx="74" cy="70.5" r="1.5"/><circle cx="78" cy="68.5" r="1.5"/><circle cx="83" cy="71.5" r="1.5"/><circle cx="76" cy="73" r="1.4"/><circle cx="88" cy="70" r="1.4"/><circle cx="72" cy="73.5" r="1.3"/></g><g fill="#e0433c"><ellipse cx="84" cy="73" rx="2.8" ry="2"/><ellipse cx="91" cy="73" rx="2" ry="1.6"/></g>
<circle cx="131" cy="75.5" r="13.6" fill="#fbfaf7" stroke="#77746e" stroke-width=".55"/><circle cx="131" cy="75.5" r="10" fill="#f1ede7"/><path d="M124 70 L139 67 L139 74.3 L124 74.3Z" fill="#d4a052"/><g fill="#e0433c"><circle cx="128" cy="72" r="2"/><circle cx="136" cy="71" r="2.2"/></g><circle cx="132" cy="69.5" r="1.4" fill="#26345c"/>
</g></g>
</svg>


<div class="cap" style="left:128px;top:315.5px">Station Info_Clock</div>
<div class="cap" style="left:335.5px;top:315.5px">Solutions-1-820x460</div>
<div class="cap" style="left:543px;top:315.5px;letter-spacing:-.15px">Shuttle Bus_URL_1_1 (1)</div>
<div class="cap" style="left:750.5px;top:315.5px;letter-spacing:-.15px">Shuttle Bus_URL_1_1</div>
<div class="cap" style="left:128px;top:471.5px">Railway station</div>
<div class="cap" style="left:335.5px;top:471.5px">QUAVANA</div>
<div class="cap" style="left:543px;top:471.5px">Muster Station</div>
<div class="cap" style="left:750.5px;top:471.5px">MicrosoftTeams-image (1)</div>

<div class="tag" style="left:128.5px;top:326.5px;width:35px">85.12 KB</div>
<div class="tag" style="left:170px;top:326.5px;width:24.5px">Clock</div>
<div class="date" style="left:128px;top:339px">2024/08/08 20:18:01</div>
<div class="tag" style="left:336px;top:326.5px;width:40px">143.86 KB</div>
<div class="tag" style="left:381px;top:326.5px;width:38px">820 * 460</div>
<div class="tag" style="left:424px;top:326.5px;width:30px">Picture</div>
<div class="date" style="left:335.5px;top:339px">2024/05/20 17:32:15</div>
<div class="tag" style="left:542.5px;top:326.5px;width:21px">URL</div>
<div class="date" style="left:543px;top:338px">2024/05/30 17:38:21</div>
<div class="tag" style="left:750px;top:326.5px;width:21px">URL</div>
<div class="date" style="left:750.5px;top:338px">2024/05/30 17:38:19</div>

<div class="menu" style="left:726px;top:101.7px;width:48px;height:43.3px;border-radius:3px"><div style="left:4.7px;top:4.6px">Folder</div><div style="left:4.7px;top:16.7px">Upload files</div><div style="left:4.7px;top:29.6px">Widget</div></div>
<div class="menu" style="left:520px;top:226.3px;width:51.4px;height:55px;border-radius:3px"><div style="left:4.2px;top:4.3px">Delete media</div><div style="left:4.2px;top:17px">Rename</div><div style="left:4.2px;top:29.5px">Make a copy</div><div style="left:4.2px;top:42.2px">Move to</div></div>

<div class="abs" style="left:696px;top:75px;width:88px;height:76px;border:4px solid #fd0202;box-shadow:2px 2px 3px rgba(0,0,0,.45),inset 2px 2px 3px rgba(0,0,0,.35)"></div>

<div class="num" style="left:97.1px;top:33px">1</div>
<div class="num" style="left:97.1px;top:77.5px">2</div>
<div class="num" style="left:97.1px;top:111.5px">3</div>
<div class="num" style="left:97.1px;top:175.5px">4</div>
<svg class="abs" style="left:0;top:0" width="6" height="6" viewBox="0 0 6 6"><path d="M0 0 H3.4 Q0 0 0 3.4Z" fill="#111"/></svg>
<svg class="abs" style="left:954px;top:0" width="6" height="6" viewBox="0 0 6 6"><path d="M6 0 H1.6 Q6 0 6 4.4Z" fill="#111"/></svg>
<svg class="abs" style="left:0;top:474px" width="6" height="6" viewBox="0 0 6 6"><path d="M0 6 H3.6 Q0 6 0 2.4Z" fill="#111"/></svg>
<div class="abs" style="left:956.3px;top:32.3px;width:5px;height:93.7px;background:#a9a9a9;border-radius:1.8px"></div>
<div class="abs" style="left:957px;top:472.5px;width:5px;height:12px;background:#b0b0b0;border-radius:1.5px"></div>

</body></html>
